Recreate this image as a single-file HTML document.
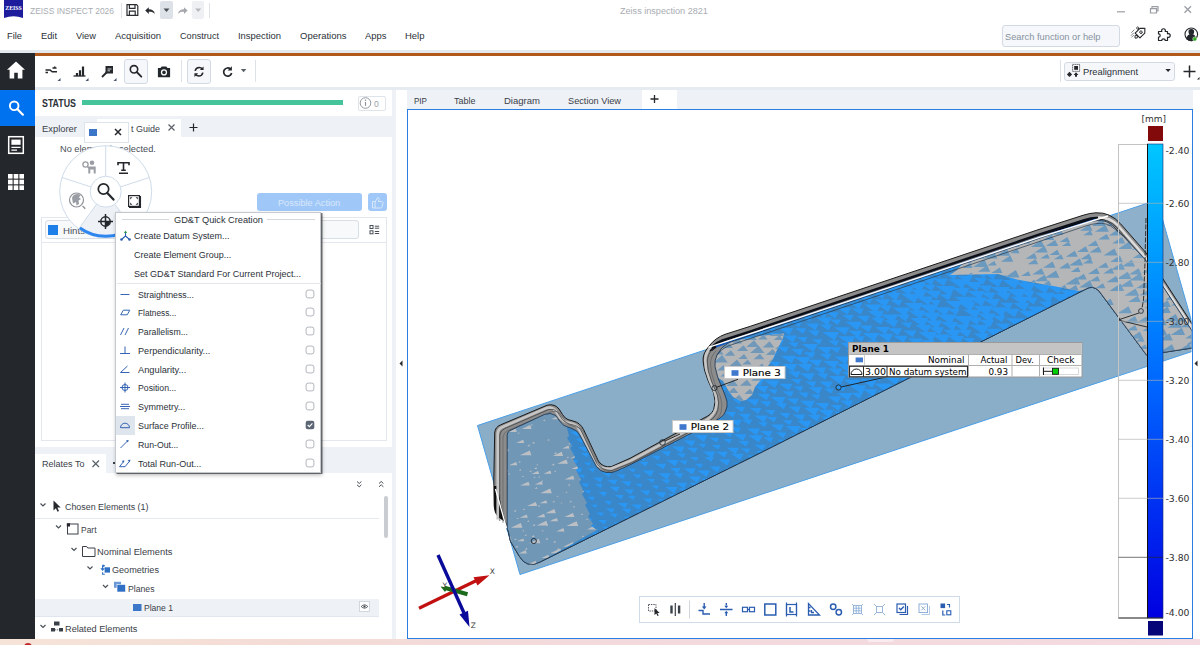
<!DOCTYPE html>
<html lang="en"><head><meta charset="utf-8"><title>ZEISS INSPECT 2026</title>
<style>
html,body{margin:0;padding:0;}
body{width:1200px;height:645px;overflow:hidden;background:#fff;position:relative;font-family:"Liberation Sans",sans-serif;}
.t{position:absolute;white-space:pre;line-height:14px;transform-origin:0 50%;}
.b{position:absolute;box-sizing:border-box;}
svg{position:absolute;left:0;top:0;overflow:visible;}
</style></head><body>
<svg width="30" height="22" viewBox="0 0 30 22"><path d="M4 0H23V18Q13.5 14.6 4 18Z" fill="#1c1c9c"/><text x="13.500" y="9.800" font-family="Liberation Serif,serif" font-weight="700" font-size="6.4" fill="#fff" text-anchor="middle" textLength="16.500" lengthAdjust="spacingAndGlyphs">ZEISS</text></svg>
<span class="t" style="left:30.0px;top:4px;line-height:13px;font-size:9.8px;color:#a9adb3;transform:scaleX(0.8584);">ZEISS INSPECT 2026</span>
<div class="b" style="left:120.5px;top:3px;width:1px;height:15px;background:#dfe3e8"></div>
<div class="b" style="left:160px;top:1px;width:13px;height:18px;background:#dde2e9;border-radius:2px"></div>
<div class="b" style="left:192px;top:1px;width:12px;height:18px;background:#eef0f3;border-radius:2px"></div>
<div class="b" style="left:208.5px;top:3px;width:1px;height:15px;background:#dfe3e8"></div>
<svg width="220" height="22" viewBox="0 0 220 22">
<g fill="none" stroke="#2a2d31" stroke-width="1.2"><path d="M127 4.6h9.5l1.3 1.3v9.5h-10.8z"/><path d="M129.4 4.8v3.6h5.6V4.8M129.4 15.2v-4h5.8v4"/></g>
<path d="M145.2 10.6l3.6-3.4v2.1c3.4 0 5.6 1.6 6 4.6-1.4-1.8-3.2-2.3-6-2.2v2.2z" fill="#2a2d31"/>
<path d="M163.5 8.6h6l-3 3.4z" fill="#4a4f56"/>
<path d="M187.6 10.6l-3.6-3.4v2.1c-3.4 0-5.6 1.6-6 4.6 1.4-1.8 3.2-2.3 6-2.2v2.2z" fill="#a4a8ad"/>
<path d="M195.2 8.6h6l-3 3.4z" fill="#b4b8bd"/>
</svg>
<span class="t" style="left:620.0px;top:4px;line-height:13px;font-size:9.7px;color:#a9adb3;transform:scaleX(0.9380);">Zeiss inspection 2821</span>
<svg width="1200" height="22" viewBox="0 0 1200 22"><g fill="none" stroke="#9a9ea4" stroke-width="1.2"><path d="M1117 11.8h8"/><path d="M1150.5 8.6h6v4.4h-6zM1152 8.6V6.6h6v4.4h-1.6"/><path d="M1184.5 6.2l6.5 6.5M1191 6.2l-6.5 6.5" stroke-width="1.3"/></g></svg>
<span class="t" style="left:7.0px;top:29px;line-height:13px;font-size:9.8px;color:#2b3138;transform:scaleX(0.9500);">File</span>
<span class="t" style="left:41.0px;top:29px;line-height:13px;font-size:9.8px;color:#2b3138;transform:scaleX(0.9475);">Edit</span>
<span class="t" style="left:76.0px;top:29px;line-height:13px;font-size:9.8px;color:#2b3138;transform:scaleX(0.9495);">View</span>
<span class="t" style="left:115.0px;top:29px;line-height:13px;font-size:9.8px;color:#2b3138;transform:scaleX(0.9707);">Acquisition</span>
<span class="t" style="left:180.0px;top:29px;line-height:13px;font-size:9.8px;color:#2b3138;transform:scaleX(0.9300);">Construct</span>
<span class="t" style="left:238.0px;top:29px;line-height:13px;font-size:9.8px;color:#2b3138;transform:scaleX(0.9626);">Inspection</span>
<span class="t" style="left:299.5px;top:29px;line-height:13px;font-size:9.8px;color:#2b3138;transform:scaleX(0.9701);">Operations</span>
<span class="t" style="left:364.5px;top:29px;line-height:13px;font-size:9.8px;color:#2b3138;transform:scaleX(0.9626);">Apps</span>
<span class="t" style="left:404.5px;top:29px;line-height:13px;font-size:9.8px;color:#2b3138;transform:scaleX(0.9675);">Help</span>
<div class="b" style="left:1001.5px;top:24.5px;width:118px;height:22px;background:#f5f7fa;border:1px solid #d3dae3;border-radius:3px"></div>
<span class="t" style="left:1005.0px;top:30px;line-height:13px;font-size:9.8px;color:#8792a0;transform:scaleX(0.9476);">Search function or help</span>
<svg width="1200" height="50" viewBox="0 0 1200 50"><g fill="none" stroke="#24272b" stroke-width="1.100" stroke-linejoin="round" stroke-linecap="round">
<g transform="translate(1139.800,33.300) rotate(45)"><path d="M0 -7.200L3.400 -3.600V3.200H-3.400V-3.600Z"/><circle cx="0" cy="-1.600" r="1.300" stroke-width=".9"/><path d="M0 3.400l1.500 1.700-1.500 1.700-1.500-1.700z" stroke-width=".9"/><path d="M-4.600 4.200v3.400M-6.400 1.600v3.600M-3 5.800v2.600" stroke-width=".8" stroke="#6a6f76"/><circle cx="-5.200" cy="-2.200" r="1.100" stroke-width=".8"/></g>
<path d="M1158.500 31.500H1161.800A1.900 1.900 0 1 1 1165.200 31.500H1167.500V33.800A1.900 1.900 0 1 1 1167.500 37.200V40.500H1165.200A1.700 1.700 0 1 0 1161.800 40.500H1158.500V37.200A1.700 1.700 0 1 0 1158.500 33.800Z" stroke-width="1.200"/>
<circle cx="1191.300" cy="34.300" r="6.300"/><circle cx="1191.300" cy="31.800" r="2.300" fill="#24272b"/><path d="M1187 38.900c.4-3 2.100-4.300 4.300-4.300s3.900 1.300 4.300 4.300c-2.700 2.300-5.900 2.300-8.600 0z" fill="#24272b"/></g>
<circle cx="1194.800" cy="39" r="2.100" fill="#2db01e" stroke="#fff" stroke-width=".5"/></svg>
<div class="b" style="left:0px;top:50px;width:1200px;height:3.5px;background:#e3e8ee"></div>
<div class="b" style="left:0px;top:53px;width:1200px;height:3px;background:#b0591b"></div>
<div class="b" style="left:35px;top:86.5px;width:1165px;height:3.5px;background:#e6ebf1"></div>
<div class="b" style="left:0px;top:53px;width:35px;height:586px;background:#24272b"></div>
<div class="b" style="left:0px;top:90px;width:35px;height:36px;background:#0072ef"></div>
<svg width="36" height="200" viewBox="0 0 36 200">
<path d="M16 61.500l-9 8.300h2.600v8.700h4.600v-5.800h3.600v5.800h4.600v-8.700h2.600z" fill="#fff"/>
<g fill="none" stroke="#fff" stroke-width="1.900"><circle cx="14.200" cy="105.800" r="4.300"/><path d="M17.300 109l5.600 5.700" stroke-linecap="round" stroke-width="2.200"/></g>
<rect x="8.700" y="136.700" width="14.600" height="16.600" fill="none" stroke="#fff" stroke-width="1.500"/><rect x="11.400" y="139.600" width="9.200" height="5.200" fill="#fff"/><path d="M11.400 147.400h9.200M11.400 150.200h5.600" stroke="#fff" stroke-width="1.200"/>
<g fill="#fff"><rect x="8" y="174" width="4.600" height="4.600"/><rect x="13.700" y="174" width="4.600" height="4.600"/><rect x="19.400" y="174" width="4.600" height="4.600"/><rect x="8" y="179.700" width="4.600" height="4.600"/><rect x="13.700" y="179.700" width="4.600" height="4.600"/><rect x="19.400" y="179.700" width="4.600" height="4.600"/><rect x="8" y="185.400" width="4.600" height="4.600"/><rect x="13.700" y="185.400" width="4.600" height="4.600"/><rect x="19.400" y="185.400" width="4.600" height="4.600"/></g>
</svg>
<div class="b" style="left:123.5px;top:59px;width:24.5px;height:24.5px;background:#f5f7fa;border:1px solid #d3dae3;border-radius:3px"></div>
<div class="b" style="left:186.5px;top:59px;width:24.5px;height:24.5px;background:#f5f7fa;border:1px solid #d3dae3;border-radius:3px"></div>
<div class="b" style="left:181px;top:60px;width:1px;height:22px;background:#dde2e8"></div>
<div class="b" style="left:254.8px;top:60px;width:1px;height:22px;background:#dde2e8"></div>
<div class="b" style="left:1060px;top:60px;width:1px;height:22px;background:#dde2e8"></div>
<svg width="270" height="90" viewBox="0 0 270 90"><g fill="none" stroke="#24272b" stroke-width="1.500">
<path d="M45.500 70h4.500l2.200 1.800h4.800M52.500 68h4M45.500 72.500h2.500M55 66.500l-1 2"/>
<path d="M73.500 76h12" stroke-width="1.300"/><path d="M77 76v-3M80 76v-5.800M83 76v-9.500" stroke-width="2.200"/>
<path d="M102 77l5-5" stroke-width="1.800"/>
</g>
<path d="M105.500 66h7.500v7.500h-7.500z" fill="#24272b"/><path d="M107.500 69h4M107.500 70.800h2.500" stroke="#fff" stroke-width=".8"/>
<g fill="#46506a"><path d="M57.500 81l3-3v3z"/><path d="M85.500 81l3-3v3z"/><path d="M113.500 81l3-3v3z"/></g>
<g fill="none" stroke="#24272b" stroke-width="1.600"><circle cx="134" cy="69.300" r="3.700"/><path d="M136.700 72l4.600 4.700" stroke-linecap="round" stroke-width="1.800"/></g>
<g transform="translate(.4,.8)"><path d="M157.500 67.200h2.600l1.200-1.500h4.600l1.200 1.500h2.600v9.300h-12.200z" fill="#24272b"/><circle cx="163.600" cy="71.600" r="3.100" fill="#fff"/><circle cx="163.600" cy="71.600" r="1.800" fill="#24272b"/></g>
<g transform="translate(199 71.700) scale(.88) translate(-199 -71.500)"><g fill="none" stroke="#24272b" stroke-width="1.800"><path d="M194.600 70.500c.6-2.500 2.400-3.800 4.600-3.800 1.600 0 2.800.6 3.800 1.800M203.400 72.500c-.6 2.500-2.400 3.800-4.600 3.800-1.600 0-2.800-.6-3.800-1.800"/></g>
<path d="M204.200 65.500v4.200h-4.200zM193.800 77.500v-4.200h4.200z" fill="#24272b"/></g>
<g transform="translate(227.500 71.500) scale(.86) translate(-227.500 -71)"><path d="M231 68.200a4.700 4.700 0 1 0 1.300 4.600" fill="none" stroke="#24272b" stroke-width="2"/><path d="M232.600 64.800v5h-5z" fill="#24272b"/></g>
<path d="M240.800 69h5.600l-2.800 3.200z" fill="#5a6068"/>
</svg>
<div class="b" style="left:1064px;top:61.5px;width:110.5px;height:19px;background:#f5f7fa;border:1px solid #d3dae3;border-radius:3px"></div>
<span class="t" style="left:1083.0px;top:65px;line-height:13px;font-size:9.8px;color:#2b3138;transform:scaleX(0.9526);">Prealignment</span>
<svg width="1200" height="90" viewBox="0 0 1200 90">
<g fill="#24272b"><path d="M1069.500 71.800l2.600 2.600-2.600 2.600-2.600-2.600z"/><path d="M1076 72.200l2.400 2.800h-1.400v1.800h-2v-1.800h-1.400z"/><rect x="1074.200" y="66" width="3.800" height="3.800"/></g>
<rect x="1072.600" y="64.400" width="7" height="7" fill="none" stroke="#24272b" stroke-width=".9" stroke-dasharray="1.100 .9"/>
<path d="M1165.400 69h5.400l-2.700 3.100z" fill="#24272b"/>
<path d="M1183.500 71.500h12M1189.500 65.500v12" stroke="#24272b" stroke-width="1.500"/><path d="M1199.500 79.500l-2.500 0 2.500-2.500z" fill="#24272b"/>
</svg>
<span class="t" style="left:41.5px;top:97px;line-height:13px;font-size:10.3px;color:#2b3138;font-weight:700;transform:scaleX(0.8570);">STATUS</span>
<div class="b" style="left:81.5px;top:100.3px;width:261.5px;height:5.1px;background:#45c49b"></div>
<div class="b" style="left:357.5px;top:95.5px;width:28.5px;height:15px;border:1px solid #dfe4ea;border-radius:2px;background:#fff"></div>
<svg width="400" height="120" viewBox="0 0 400 120"><circle cx="365.500" cy="103" r="5.300" fill="none" stroke="#8a8f96" stroke-width=".9"/><path d="M365.500 102v3.800" stroke="#8a8f96" stroke-width="1.100"/><circle cx="365.500" cy="100.200" r=".75" fill="#8a8f96"/></svg>
<span class="t" style="left:373.8px;top:97px;line-height:13px;font-size:9.5px;color:#9aa0a8;transform:scaleX(0.9086);">0</span>
<div class="b" style="left:35px;top:116px;width:357px;height:21px;background:#eef2f7"></div>
<div class="b" style="left:97px;top:118.5px;width:84px;height:18.5px;background:#fff"></div>
<span class="t" style="left:41.5px;top:122px;line-height:13px;font-size:9.7px;color:#3a4048;transform:scaleX(0.9691);">Explorer</span>
<span class="t" style="left:130.5px;top:122px;line-height:13px;font-size:9.7px;color:#3a4048;transform:scaleX(0.9274);">t Guide</span>
<svg width="400" height="140" viewBox="0 0 400 140"><path d="M168.500 124.500l6 6M174.500 124.500l-6 6" stroke="#5a6068" stroke-width="1.200"/><path d="M189.500 127.500h8M193.500 123.500v8" stroke="#24272b" stroke-width="1.200"/></svg>
<span class="t" style="left:59.5px;top:142px;line-height:13px;font-size:9.7px;color:#4a5058;transform:scaleX(0.9522);">No element is selected.</span>
<div class="b" style="left:257px;top:193px;width:105px;height:18.4px;background:#9fc7f8;border-radius:3px"></div>
<span class="t" style="left:278.0px;top:196px;line-height:13px;font-size:9.7px;color:#d9e8fb;transform:scaleX(0.9471);">Possible Action</span>
<div class="b" style="left:368.2px;top:193px;width:18.8px;height:18.4px;background:#9fc7f8;border-radius:3px"></div>
<svg width="400" height="220" viewBox="0 0 400 220"><path d="M372.500 201.500h2.600v6.500h-2.600zM375.100 202l2.400-4.200c1.300-.3 1.700.6 1.500 1.600l-.5 2.200h3.300c1 0 1.400.7 1.200 1.500l-1 3.800c-.2.700-.7 1.100-1.500 1.100h-5.400" fill="none" stroke="#d9e8fb" stroke-width="1"/></svg>
<div class="b" style="left:40.5px;top:216.8px;width:346.5px;height:224.7px;border:1px solid #e3e8ee;background:#fff"></div>
<div class="b" style="left:40.5px;top:242px;width:346.5px;height:1px;background:#e3e8ee"></div>
<div class="b" style="left:45px;top:220.3px;width:314px;height:19px;border:1px solid #d8dee6;border-radius:3px;background:#f7f9fb"></div>
<div class="b" style="left:48px;top:225px;width:10px;height:10px;background:#1e7fe8"></div>
<span class="t" style="left:63.0px;top:224px;line-height:13px;font-size:9.7px;color:#4a5058;transform:scaleX(0.9955);">Hints</span>
<svg width="400" height="240" viewBox="0 0 400 240"><g fill="none" stroke="#4a5058" stroke-width="1"><rect x="370" y="225.500" width="3" height="3"/><rect x="370" y="230.800" width="3" height="3"/><path d="M374.800 226.200h4.400M374.800 228.200h4.400M374.800 231.500h4.400M374.800 233.500h4.400"/></g></svg>
<div class="b" style="left:35px;top:446.8px;width:357px;height:26.2px;background:#eef2f7"></div>
<div class="b" style="left:35px;top:453.9px;width:70.7px;height:19.2px;background:#fff"></div>
<div class="b" style="left:113.3px;top:462px;width:1.5px;height:1.5px;background:#3a4048"></div>
<span class="t" style="left:41.8px;top:457px;line-height:13px;font-size:9.7px;color:#3a4048;transform:scaleX(0.9310);">Relates To</span>
<svg width="400" height="500" viewBox="0 0 400 500"><path d="M92.500 460.500l6.500 6.500M99 460.500l-6.500 6.500" stroke="#5a6068" stroke-width="1.200"/>
<g fill="none" stroke="#4a5058" stroke-width="1"><path d="M357 481.500l2.200 2 2.200-2M357 484.800l2.200 2 2.200-2"/><path d="M379 483.500l2.200-2 2.200 2M379 486.800l2.200-2 2.200 2"/></g></svg>
<div class="b" style="left:383.5px;top:496px;width:4px;height:41.5px;background:#c9ccd0;border-radius:2px"></div>
<div class="b" style="left:35px;top:517.5px;width:344px;height:1px;background:#e6eaef"></div>
<div class="b" style="left:35px;top:598.5px;width:344px;height:17px;background:#eef2f7"></div>
<div class="b" style="left:35px;top:615.5px;width:344px;height:1px;background:#dfe6ee"></div>
<span class="t" style="left:64.8px;top:500px;line-height:13px;font-size:9.7px;color:#3a4048;transform:scaleX(0.9165);">Chosen Elements (1)</span>
<span class="t" style="left:80.5px;top:523px;line-height:13px;font-size:9.7px;color:#3a4048;transform:scaleX(0.8713);">Part</span>
<span class="t" style="left:96.7px;top:545px;line-height:13px;font-size:9.7px;color:#3a4048;transform:scaleX(0.9593);">Nominal Elements</span>
<span class="t" style="left:112.2px;top:563px;line-height:13px;font-size:9.7px;color:#3a4048;transform:scaleX(0.9375);">Geometries</span>
<span class="t" style="left:127.7px;top:582px;line-height:13px;font-size:9.7px;color:#3a4048;transform:scaleX(0.8935);">Planes</span>
<span class="t" style="left:143.8px;top:601px;line-height:13px;font-size:9.7px;color:#3a4048;transform:scaleX(0.8815);">Plane 1</span>
<span class="t" style="left:64.8px;top:622px;line-height:13px;font-size:9.7px;color:#3a4048;transform:scaleX(0.9470);">Related Elements</span>
<svg width="400" height="645" viewBox="0 0 400 645">
<g fill="none" stroke="#4a5058" stroke-width="1.150"><path d="M40.500 503.500l2.500 2.500 2.500-2.500"/><path d="M56 525.500l2.500 2.500 2.500-2.500"/><path d="M71.500 548l2.500 2.500 2.500-2.500"/><path d="M87.500 566.500l2.500 2.500 2.500-2.500"/><path d="M103 585l2.500 2.500 2.500-2.500"/><path d="M40.500 625l2.500 2.500 2.500-2.500"/></g>
<path d="M53.500 500.500v10l2.400-2.300 1.600 3.600 1.500-.7-1.600-3.500h3.300z" fill="#24272b"/>
<rect x="67.500" y="524" width="10.500" height="10" fill="none" stroke="#3a4048" stroke-width="1"/><rect x="66.800" y="523.300" width="3.200" height="3.200" fill="#24272b"/>
<path d="M82.500 546.500h4.200l1 1.500h7.300v8.500h-12.500z" fill="none" stroke="#3a4048" stroke-width="1"/>
<g fill="#2f6fc4"><rect x="104.600" y="567.300" width="5.400" height="5.300"/><path d="M104.800 565.800h-2.200v3.400M104.800 574.200h-2.200v-2" stroke="#2f6fc4" stroke-width="1.100" fill="none"/><path d="M100.300 568.300h4.600l-2.300 2.800z"/><path d="M102.600 564.200l2.400 1.600-2.400 1.600z"/></g>
<rect x="114" y="581.800" width="7" height="6" fill="#6a9ad8"/><rect x="117" y="584.500" width="8.500" height="7.500" fill="#2f6fc4" stroke="#fff" stroke-width=".6"/>
<rect x="133" y="604" width="8.500" height="7" fill="#3b76c9"/>
<g fill="#3a4048"><rect x="54" y="621.500" width="5.500" height="4"/><rect x="51" y="628" width="4" height="3.500"/><rect x="59" y="628" width="4" height="3.500"/><path d="M55.200 629.800h3.600" stroke="#3a4048" stroke-width="1" stroke-dasharray="1 1"/></g>
<rect x="359.500" y="601.500" width="10" height="10" fill="#fff" stroke="#c9ced5" stroke-width=".8"/><path d="M361.200 606.500q3.300-3.400 6.600 0q-3.300 3.400-6.600 0z" fill="none" stroke="#3a4048" stroke-width=".8"/><circle cx="364.500" cy="606.500" r="1.100" fill="#3a4048"/>
</svg>
<div class="b" style="left:392px;top:90px;width:3.5px;height:549px;background:#eef2f7"></div>
<svg width="410" height="400" viewBox="0 0 410 400"><path d="M399.500 363.500l3-3v6z" fill="#24272b"/></svg>
<div class="b" style="left:407px;top:90px;width:785.5px;height:20px;background:#eef2f7"></div>
<div class="b" style="left:641.5px;top:90px;width:35px;height:19.5px;background:#fff"></div>
<span class="t" style="left:413.5px;top:94px;line-height:13px;font-size:9.7px;color:#3a4048;transform:scaleX(0.8315);">PIP</span>
<span class="t" style="left:454.0px;top:94px;line-height:13px;font-size:9.7px;color:#3a4048;transform:scaleX(0.9272);">Table</span>
<span class="t" style="left:503.5px;top:94px;line-height:13px;font-size:9.7px;color:#3a4048;transform:scaleX(0.9822);">Diagram</span>
<span class="t" style="left:567.5px;top:94px;line-height:13px;font-size:9.7px;color:#3a4048;transform:scaleX(0.9482);">Section View</span>
<svg width="700" height="110" viewBox="0 0 700 110"><path d="M650.500 99h8M654.500 95v8" stroke="#24272b" stroke-width="1.300"/></svg>
<div class="b" style="left:407px;top:109px;width:785.5px;height:529.5px;background:#fff;border:1px solid #2a7de1"></div>
<svg width="1200" height="400" viewBox="0 0 1200 400"><path d="M1194.500 363.500l3-3v6z" fill="#24272b"/></svg>
<svg width="1200" height="645" viewBox="0 0 1200 645">
<defs>
<clipPath id="vp"><rect x="408" y="110" width="783.500" height="527.500"/></clipPath>
<pattern id="triD" width="13" height="8" patternUnits="userSpaceOnUse" patternTransform="rotate(-27) skewX(-20)">
<path d="M0 7.500L9.500 7.500 9.500 1.500Q5 2.500 0 7.500Z" fill="#3a86c8"/><path d="M9.500 4L13 4 13 .5Q11 1.500 9.500 4Z" fill="#3a86c8"/><path d="M2 2.500L6 2.500 6 .5Z" fill="#3a86c8"/>
</pattern>
<pattern id="triB" width="19" height="13" patternUnits="userSpaceOnUse" patternTransform="rotate(-27) skewX(-20)">
<path d="M1 9L8 9 8 4.500Z" fill="#2397fb"/><path d="M11 4L15 4 15 1.500Z" fill="#2397fb"/>
</pattern>
<pattern id="spk" width="29" height="21" patternUnits="userSpaceOnUse" patternTransform="rotate(-12)">
<path d="M2 7L10 5 8.500 9.500Z" fill="#bcc0c4"/><path d="M17 16.500L23.500 15 22.500 19Z" fill="#bcc0c4"/><path d="M15 4l2 .4-1 1.600z" fill="#bcc0c4"/><path d="M5 16l1.600 .3-.7 1.800z" fill="#bcc0c4"/><path d="M24 6l1.400 .3-.6 1.500z" fill="#bcc0c4"/>
</pattern>
<pattern id="spk2" width="16" height="11" patternUnits="userSpaceOnUse" patternTransform="rotate(-25) skewX(-15)">
<path d="M.5 9L10 9 9.500 3Z" fill="#6a97bd"/><path d="M10.500 4.500L16 4.500 15.500 .5Z" fill="#6a97bd"/>
</pattern>
<pattern id="spk3" width="41" height="29" patternUnits="userSpaceOnUse" patternTransform="rotate(-18)">
<path d="M3 10l9-2 3 3-5 1 2 3-6-1z" fill="#6a97bd"/><path d="M24 22l8-1.500-2 4z" fill="#6a97bd"/>
</pattern>
<pattern id="spk4" width="19" height="11" patternUnits="userSpaceOnUse" patternTransform="rotate(-22) skewX(-20)">
<path d="M0 9.500Q5 3 12 4.500Q16 6 19 9.500Z" fill="#7198b8"/>
</pattern>
<pattern id="spkb" width="37" height="31" patternUnits="userSpaceOnUse" patternTransform="rotate(-20)">
<path d="M4 12l7-3 1 2 5-1-4 3-3-1z" fill="#bcc0c4"/><path d="M22 25l6-2.500-1.500 4z" fill="#bcc0c4"/>
</pattern>
<linearGradient id="gD" gradientUnits="userSpaceOnUse" x1="590" y1="490" x2="960" y2="325">
<stop offset="0" stop-color="#fff" stop-opacity="1"/><stop offset=".3" stop-color="#fff" stop-opacity=".8"/><stop offset=".65" stop-color="#fff" stop-opacity=".4"/><stop offset="1" stop-color="#fff" stop-opacity="0"/>
</linearGradient>
<mask id="mD" maskUnits="userSpaceOnUse" x="400" y="100" width="800" height="540"><rect x="400" y="100" width="800" height="540" fill="url(#gD)"/></mask>
<linearGradient id="cbar" x1="0" y1="0" x2="0" y2="1"><stop offset="0" stop-color="#00c6ff"/><stop offset=".25" stop-color="#0098ff"/><stop offset=".5" stop-color="#0068ff"/><stop offset=".8" stop-color="#0028f0"/><stop offset="1" stop-color="#0000e0"/></linearGradient>
</defs>
<g clip-path="url(#vp)">
<path d="M477.500 425.500 L1157 200 L1199.500 349 L520 574.500Z" fill="#8aadc8" stroke="#4a9fe8" stroke-width="1"/>
<path d="M493.800 480 L494.200 506 Q494.500 513 498 516.500 L505.500 522 L508 530 L510.500 541.500 L519.500 556.500 Q523 562.500 528 564 Q533 566 540 562 L760 453 L1085 289.500 Q1093 284.500 1099 291 L1146.500 355 L1200 346.800 L1200 336 L1146 252.800 L1120.500 223.700 Q1110 212 1096 212.800 Q1090 213 1083 215.300 L1040 229.100 L800 309.600 L750.300 326.300 L725.100 334.300 Q715 338 709.200 346 Q702 354 703.200 362 L704.500 370 L708 380.400 L713.700 393 Q716.500 401.500 713.700 409.700 Q711 415 704 418 L630 458.300 L611.400 466.600 Q603 468 598.400 461 L583.500 429.400 Q580 422.500 573 421 L568 419.600 Q565 418.600 562.500 414.500 L559 409 Q555 403.500 547.200 405.200 L500.700 424.800 Q495 427 494.700 433Z" fill="#8c8c8c" stroke="#1a1a1a" stroke-width="1"/>
<path d="M707 351.500 Q712 343.500 722 339.300 L750.300 330.200 L1040 233 L1084 218.900 Q1094 215.800 1100 217 L1105 219.300 L1098 219.800 L1040 235.600 L750.300 332.800 L724 341.600 L712 351Z" fill="#0a0e18"/>
<path d="M716 346.500 L750.300 334.600 L1040 237.400 L1096 219.500" fill="none" stroke="#1256b8" stroke-width="2"/>
<path d="M494 486 L494.200 506 Q494.500 513 498 516.500 L505.500 522 L501 505 L497.500 486Z" fill="#0c0c0c"/>
<path d="M498.500 520 L498.500 434 Q499 429.500 503.500 427.500 L547.500 408.500 Q553 407 556.500 411.500 L561 418.500 Q564 422 568 423 L573 424.300 Q578 425.500 580.500 431 L595.500 462.500 Q600 469.500 611 469.500 L631 461.500 L706 421.500 Q714 417 716.500 409.500 Q718.500 402 716 394 L710.500 381 L707 370 L706 361 Q706 353 712 347.500" fill="none" stroke="#c6c6c6" stroke-width="2.600" transform="translate(-.8,-.6)"/>
<path d="M498.500 520 L498.500 434 Q499 429.500 503.500 427.500 L547.500 408.500 Q553 407 556.500 411.500 L561 418.500 Q564 422 568 423 L573 424.300 Q578 425.500 580.500 431 L595.500 462.500 Q600 469.500 611 469.500 L631 461.500 L706 421.500 Q714 417 716.500 409.500 Q718.500 402 716 394 L710.500 381 L707 370 L706 361 Q706 353 712 347.500" fill="none" stroke="#3a3a3a" stroke-width=".7" transform="translate(1.300,1)"/>
<path d="M498.500 520 L498.500 434 Q499 429.500 503.500 427.500 L547.500 408.500 Q553 407 556.500 411.500 L561 418.500 Q564 422 568 423 L573 424.300 Q578 425.500 580.500 431 L595.500 462.500 Q600 469.500 611 469.500 L631 461.500 L706 421.500 Q714 417 716.500 409.500 Q718.500 402 716 394 L710.500 381 L707 370 L706 361 Q706 353 712 347.500" fill="none" stroke="#5a5a5a" stroke-width=".6" transform="translate(4.500,3)"/>
<path d="M1098 217.500 Q1110 217 1118 225.500 L1144 255.500 L1200 340" fill="none" stroke="#dcdcdc" stroke-width="2.400"/>
<path d="M1098 217.500 Q1110 217 1118 225.500 L1144 255.500 L1200 340" fill="none" stroke="#2a2a2a" stroke-width=".8" transform="translate(-1.500,1.800)"/>
<clipPath id="cFace"><path d="M507.200 530 L507.200 435 Q507.200 432 510 430.500 L544.400 414.500 Q550.500 412 555.600 415.500 L561.200 422.900 Q563.500 425.800 566.700 426.600 L572 428.500 Q577 430 579.800 435 L596.500 466.600 Q600 471.500 606 472.400 L612 472.400 Q616 471.500 630 464.800 L715 421 Q723 417 724.900 412.500 Q728 407 727 401.400 L724.200 393 L717.900 377.700 L715 366.500 Q714.500 360 717 355 Q721 347 728 343 L750.300 335.300 L1040 238.100 L1086 222.800 Q1098 219 1106 221.500 Q1110 223 1114 227 L1123.300 236.300 L1145.600 260 L1200 343 L1200 346.800 L1146.500 355 L1099 291 Q1093 284.500 1085 289.500 L760 453 L540 562 Q533 566 528 564 Q523 562.500 519.500 556.500 L510.500 541.500 L508 530Z"/></clipPath>
<path d="M507.200 530 L507.200 435 Q507.200 432 510 430.500 L544.400 414.500 Q550.500 412 555.600 415.500 L561.200 422.900 Q563.500 425.800 566.700 426.600 L572 428.500 Q577 430 579.800 435 L596.500 466.600 Q600 471.500 606 472.400 L612 472.400 Q616 471.500 630 464.800 L715 421 Q723 417 724.900 412.500 Q728 407 727 401.400 L724.200 393 L717.900 377.700 L715 366.500 Q714.500 360 717 355 Q721 347 728 343 L750.300 335.300 L1040 238.100 L1086 222.800 Q1098 219 1106 221.500 Q1110 223 1114 227 L1123.300 236.300 L1145.600 260 L1200 343 L1200 346.800 L1146.500 355 L1099 291 Q1093 284.500 1085 289.500 L760 453 L540 562 Q533 566 528 564 Q523 562.500 519.500 556.500 L510.500 541.500 L508 530Z" fill="#3987c9"/>
<g clip-path="url(#cFace)"><path d="M495.7 534.5h7.7l-2.1 3.9zM500.3 541.4h6.6l-1.8 3.3zM503.8 548.1h6.5l-1.8 3.3zM506.3 555.8h8.1l-2.2 4.1zM511.8 563.5h8.1l-2.2 4.1zM497.1 507h7.2l-2 3.7zM500.1 514.6h8.7l-2.4 4.4zM504.9 520.5h6.5l-1.8 3.3zM506.6 528.1h6.9l-1.9 3.5zM510.4 536.4h9.7l-2.7 4.9zM514.5 543.9h9l-2.5 4.5zM517.3 550.6h6.6l-1.8 3.3zM521.8 558.5h9.2l-2.5 4.6zM525.5 566.1h8.8l-2.4 4.4zM497.5 476.8h9.6l-2.7 4.9zM500.7 486.1h8.7l-2.4 4.4zM503.6 493.9h9.4l-2.6 4.7zM507.6 501h6.8l-1.9 3.4zM511.4 506.7h6.9l-1.9 3.5zM515.7 515.7h9.1l-2.5 4.6zM518.1 523.6h10l-2.8 5zM522.4 530.6h8.8l-2.4 4.4zM527 538.2h9.8l-2.7 5zM528.3 546.4h9.1l-2.5 4.6zM534.3 554.3h9l-2.5 4.6zM536.3 561.5h7.5l-2.1 3.8zM497.1 448.3h6.4l-1.8 3.2zM499.7 457.5h6.8l-1.9 3.4zM503.7 464.1h6.8l-1.9 3.5zM506.9 471.9h10l-2.8 5zM512.6 480.4h8.6l-2.4 4.3zM514.6 487h9.9l-2.7 5zM519.8 496h7.8l-2.2 3.9zM521.6 501.7h6.9l-1.9 3.5zM526 510.2h7.3l-2 3.7zM528.3 517.4h7.4l-2 3.7zM533.4 526.4h7.9l-2.2 4zM536.8 533.1h9.2l-2.5 4.6zM539.2 541.4h9.1l-2.5 4.6zM545 548.8h9.6l-2.6 4.8zM547.3 554.6h7.9l-2.2 4zM499.9 427.4h9l-2.5 4.5zM503.7 435.7h7.2l-2 3.6zM506.9 442.8h6.5l-1.8 3.3zM511.4 450.1h6.7l-1.9 3.4zM515.7 458h10l-2.8 5zM518.6 466.1h7.4l-2 3.7zM523.5 475.4h6.8l-1.9 3.4zM526.2 480.6h8.3l-2.3 4.2zM529.4 488.7h6.7l-1.9 3.4zM532.5 495.7h9.8l-2.7 4.9zM537.1 503.6h10.3l-2.8 5.2zM539.4 512.2h8.6l-2.4 4.3zM545.1 520.2h10.4l-2.9 5.3zM547.5 526.4h7.4l-2 3.7zM551.5 535.6h9.5l-2.6 4.8zM554.3 543.3h7.7l-2.1 3.9zM559.5 550.9h10.4l-2.9 5.3zM512.6 422.3h9.7l-2.7 4.9zM515.2 429.4h8.5l-2.3 4.3zM518.6 437.6h6.4l-1.8 3.2zM524 445.7h9.2l-2.5 4.6zM527.7 454.6h10.2l-2.8 5.2zM529.3 460.3h7.8l-2.2 4zM532.8 468.9h7.1l-2 3.6zM538.1 476.1h10.1l-2.8 5.1zM541.6 482.7h9l-2.5 4.6zM545.5 492.1h9.1l-2.5 4.6zM547.9 498.2h9.5l-2.6 4.8zM551.2 507.4h9.6l-2.7 4.9zM554.9 513.9h10.4l-2.9 5.2zM559.4 520.9h10.3l-2.8 5.2zM561.5 530.5h6.8l-1.9 3.4zM565.1 537.8h9.7l-2.7 4.9zM570 544.2h10.4l-2.9 5.3zM522 416.2h8.6l-2.4 4.3zM527 425.2h10.4l-2.9 5.2zM530 433.7h10.2l-2.8 5.2zM533 439.7h9.8l-2.7 4.9zM536.7 448.1h7.5l-2.1 3.8zM540.8 454.5h7.4l-2 3.7zM544.2 463h10.1l-2.8 5.1zM549.3 470.5h8.8l-2.4 4.4zM551.8 478.4h10.2l-2.8 5.1zM554.1 485.7h8.5l-2.3 4.3zM557.7 494.3h7.1l-2 3.6zM562.5 501.7h7l-1.9 3.5zM565.7 508.7h8.6l-2.4 4.4zM570.5 515.3h8.6l-2.4 4.4zM572.7 523.3h8.7l-2.4 4.4zM577 531.7h9.5l-2.6 4.8zM581.7 539h9.5l-2.6 4.8zM534 412h8.9l-2.5 4.5zM537.5 419.7h9.2l-2.5 4.6zM542.3 427.7h8.3l-2.3 4.2zM545.9 434.2h10l-2.8 5zM549.6 443.3h8.6l-2.4 4.4zM551 449.8h6.9l-1.9 3.5zM554.9 456.5h6.6l-1.8 3.3zM559.9 466.2h9.1l-2.5 4.6zM563.4 473.2h6.9l-1.9 3.5zM567.4 481.6h6.9l-1.9 3.5zM571.2 487.7h7.2l-2 3.6zM574.9 496.5h8.3l-2.3 4.2zM577 503.2h7l-1.9 3.5zM580 510.3h7.7l-2.1 3.9zM583.2 518.5h9.3l-2.6 4.7zM586.7 525.6h8.1l-2.3 4.1zM591.6 532.5h8.9l-2.5 4.5zM545.7 407.7h10.5l-2.9 5.3zM548 412.9h6.8l-1.9 3.4zM551.6 420.7h9.7l-2.7 4.9zM556.9 430.1h8.2l-2.3 4.1zM558.5 438h7.5l-2.1 3.8zM563.5 443.4h8.8l-2.4 4.4zM567.1 451.9h6.6l-1.8 3.3zM571.3 460h6.7l-1.8 3.4zM572.7 468.2h9.8l-2.7 4.9zM578.3 474.8h6.7l-1.8 3.4zM581.1 483.6h7.8l-2.2 3.9zM583.6 490.2h7.5l-2.1 3.8zM587.2 496.8h7.4l-2 3.7zM591 504.8h6.6l-1.8 3.3zM596.1 512.4h7.7l-2.1 3.9zM598.2 520.1h8.5l-2.3 4.3zM602 526.8h6.4l-1.8 3.3zM559.7 407.8h9.7l-2.7 4.9zM564.3 415.2h8.6l-2.4 4.3zM566.6 423.8h10.1l-2.8 5.1zM570.1 431.4h10.2l-2.8 5.1zM575.3 438.6h9.5l-2.6 4.8zM578.1 447h10.2l-2.8 5.1zM580.8 453h8.3l-2.3 4.2zM583.7 462.4h7.1l-2 3.6zM587.5 468.3h7.7l-2.1 3.9zM593 477.4h10.2l-2.8 5.2zM594.9 484.1h7.8l-2.1 3.9zM598.3 492.1h8.6l-2.4 4.3zM604 501h7.7l-2.1 3.9zM605.7 508.6h8.9l-2.5 4.5zM609.6 513.7h7.9l-2.2 4zM613.5 522.6h8.2l-2.3 4.1zM617.2 528.9h7.4l-2.1 3.8zM580.3 425.6h7.9l-2.2 4zM583.8 433h6.9l-1.9 3.5zM588.8 441.2h7.8l-2.1 3.9zM592.6 449.3h10.1l-2.8 5.1zM595.5 455.8h10.7l-2.9 5.4zM598.5 464.5h11.1l-3.1 5.6zM601.8 472.4h9.6l-2.7 4.9zM606.9 479.7h10.7l-3 5.4zM609.3 486.8h10.4l-2.9 5.2zM614.7 495.1h9l-2.5 4.5zM617.6 502.9h10.4l-2.9 5.3zM621.5 508.8h9.8l-2.7 4.9zM623.6 516.7h6.9l-1.9 3.5zM629.1 524.9h7.2l-2 3.6zM614.3 466.5h9.8l-2.7 4.9zM616.3 474.4h9.2l-2.5 4.6zM621.2 481.3h10.4l-2.9 5.2zM623.7 489.4h9.9l-2.7 5zM627.3 495.8h8.1l-2.2 4.1zM631.2 504.6h10.3l-2.8 5.2zM635.6 511.3h11.4l-3.1 5.8zM639.7 519.9h9.1l-2.5 4.6zM625.4 459.4h10l-2.8 5zM628 468.7h7.8l-2.1 3.9zM632.4 474.4h8.5l-2.4 4.3zM635.2 483.7h7.4l-2 3.7zM639.9 490.4h10.4l-2.9 5.2zM642.9 498.4h9.5l-2.6 4.8zM647.6 505.3h7.6l-2.1 3.9zM651.3 512.4h11.7l-3.2 5.9zM636.8 456.2h9.5l-2.6 4.8zM639 461.8h9.4l-2.6 4.8zM642.4 470.4h11.8l-3.3 6zM646.9 479h8l-2.2 4zM651.2 485.4h7.9l-2.2 4zM654.5 492.3h11.6l-3.2 5.8zM657.6 499.4h11.6l-3.2 5.9zM661.2 508.1h7.3l-2 3.7zM646.1 449.1h8.9l-2.5 4.5zM651.5 455.8h9l-2.5 4.5zM655.1 463.7h11.2l-3.1 5.6zM658.4 473.3h12l-3.3 6.1zM661.1 479.6h8.9l-2.5 4.5zM665.2 487.1h12.4l-3.4 6.3zM668 493.9h9.6l-2.6 4.8zM673.1 502.1h8l-2.2 4zM657.3 443.4h12.4l-3.4 6.2zM660.8 451.3h10.2l-2.8 5.2zM666.2 460h12.5l-3.4 6.3zM669.9 467.9h10.8l-3 5.5zM673 473.2h10.4l-2.9 5.3zM675.9 482.7h11.3l-3.1 5.7zM679 488.4h10.9l-3 5.5zM682.2 497.1h12.3l-3.4 6.2zM668.5 439.1h9.6l-2.6 4.8zM672 446.5h12.9l-3.6 6.5zM676.3 453.4h9.4l-2.6 4.7zM678.9 460.5h8.7l-2.4 4.4zM683.4 468.2h12.5l-3.5 6.3zM688.3 476.4h12.5l-3.5 6.3zM689.8 483h8.5l-2.4 4.3zM693.1 491h9.6l-2.6 4.8zM680.2 434h9.4l-2.6 4.7zM683.4 440.4h12l-3.3 6zM686.9 447.8h10.8l-3 5.4zM690.2 457h8.3l-2.3 4.2zM694.4 463.7h8.7l-2.4 4.4zM697.3 470.4h12.6l-3.5 6.3zM701.3 478.5h9.3l-2.6 4.7zM706.1 487.2h13.1l-3.6 6.6zM689.8 428h8.3l-2.3 4.2zM694.5 435.3h13l-3.6 6.6zM697.9 443.8h8.2l-2.3 4.1zM702.7 451.5h12.6l-3.5 6.4zM704.4 457h9.5l-2.6 4.8zM709.5 466.6h11l-3 5.6zM713 473.8h12.1l-3.3 6.1zM716.3 479.5h10.7l-2.9 5.4zM701.3 423.1h12.7l-3.5 6.4zM705.1 428.6h11.9l-3.3 6zM709.6 437.7h9.7l-2.7 4.9zM711.7 444.9h9l-2.5 4.5zM716.1 451.7h11.6l-3.2 5.8zM718.7 459.5h11.7l-3.2 5.9zM724.8 468h10.9l-3 5.5zM727.1 474.5h13.3l-3.7 6.7zM710.6 409.4h9.9l-2.7 5zM711.8 416.5h10.3l-2.8 5.2zM716.4 423.5h12.3l-3.4 6.2zM721.3 431h12.3l-3.4 6.2zM723.4 439.1h8.7l-2.4 4.4zM726.6 447.7h12.4l-3.4 6.3zM731 453.7h12.7l-3.5 6.4zM734.1 462.9h14l-3.9 7.1zM737.5 470.4h9.8l-2.7 5zM707.2 373h10.4l-2.9 5.2zM708.9 380.4h9.8l-2.7 4.9zM714.4 387.3h12.5l-3.5 6.3zM716.1 397h11l-3 5.5zM719.2 402.3h9.5l-2.6 4.8zM725 412h11l-3 5.5zM728.9 419.7h12.9l-3.6 6.5zM730.4 427.3h10.6l-2.9 5.4zM733.6 434.2h13l-3.6 6.6zM738.1 441h10.9l-3 5.5zM740.7 448.4h9.7l-2.7 4.9zM746.8 455.6h10.7l-3 5.4zM748.4 463.8h14.3l-3.9 7.2zM710.6 352.1h13.7l-3.8 6.9zM713.3 359.6h9.2l-2.5 4.6zM716.2 367.1h14.3l-4 7.2zM719.4 374.9h14.2l-3.9 7.2zM724.9 381.5h13.7l-3.8 6.9zM726.7 391.4h9.1l-2.5 4.6zM732 398.9h10.4l-2.9 5.2zM734.4 406.7h10.9l-3 5.5zM738 413.7h12.5l-3.5 6.3zM741.6 419.4h10.7l-3 5.4zM746.9 428.6h13.3l-3.7 6.7zM748.2 435.2h14.5l-4 7.3zM754.2 444.7h11.7l-3.2 5.9zM756 450.9h11.2l-3.1 5.6zM761.3 457.9h11.8l-3.3 6zM717.8 340h13.9l-3.8 7zM721.1 346.4h13.7l-3.8 6.9zM724 355.1h11l-3 5.5zM727.2 362.7h9.5l-2.6 4.8zM730.5 368.4h10.5l-2.9 5.3zM734.7 378.4h12.4l-3.4 6.3zM740.1 384.2h14.4l-4 7.3zM741.4 392.4h9.6l-2.6 4.8zM745.9 399.3h13.3l-3.7 6.7zM749.9 408.1h11.6l-3.2 5.8zM754.1 415.6h13.6l-3.7 6.8zM757.7 422.3h9.8l-2.7 4.9zM760.1 431h12.5l-3.4 6.3zM763.3 437.3h10.3l-2.8 5.2zM768.6 445.8h10l-2.8 5zM770.9 454.5h11l-3 5.6zM727.5 334.5h12.3l-3.4 6.2zM733.1 340.3h13.2l-3.7 6.7zM736.2 349.8h12.1l-3.4 6.1zM737.8 356h14.9l-4.1 7.5zM741.8 365.3h10l-2.8 5zM747.3 371.4h12.8l-3.5 6.5zM749.7 378.7h14.6l-4 7.3zM754.6 385.9h14l-3.9 7.1zM757.3 393.8h12.9l-3.6 6.5zM759.7 401.3h11.5l-3.2 5.8zM764.5 410.1h10.8l-3 5.5zM766.5 416.9h10.5l-2.9 5.3zM770.6 424.4h13.4l-3.7 6.8zM775.8 432.6h10.5l-2.9 5.3zM777.6 439.8h9.6l-2.7 4.9zM782.6 446.6h12.6l-3.5 6.4zM739.7 328h10.4l-2.9 5.3zM742.3 337h11.2l-3.1 5.6zM746.6 343h11.4l-3.1 5.7zM750.9 352.3h12l-3.3 6.1zM752.8 359.2h11.7l-3.2 5.9zM755.9 367.2h10.7l-3 5.4zM761.6 373.6h12.1l-3.3 6.1zM764.3 380.5h14.9l-4.1 7.5zM768.1 389.4h9.5l-2.6 4.8zM770.5 396.9h15.1l-4.2 7.6zM775.2 403.3h11.7l-3.2 5.9zM778.9 412.9h11.2l-3.1 5.6zM782.4 420.2h10.1l-2.8 5.1zM785.2 426h15.5l-4.3 7.8zM790.8 434.6h15.3l-4.2 7.7zM794.3 441.9h9.7l-2.7 4.9zM750.5 323.5h15.4l-4.2 7.8zM754.5 329.6h10.6l-2.9 5.4zM758.3 338.8h12.2l-3.4 6.1zM760.3 345.2h10.8l-3 5.4zM764.3 352.1h12.9l-3.6 6.5zM768.8 361.7h11.2l-3.1 5.6zM772 369h9.8l-2.7 5zM776.3 374.9h9.8l-2.7 5zM779.1 383.8h13.4l-3.7 6.8zM782.4 391.3h11.5l-3.2 5.8zM786.6 398.6h12.3l-3.4 6.2zM788.6 406.6h12.4l-3.4 6.3zM792.7 414.6h12.7l-3.5 6.4zM796.9 420.7h14.6l-4 7.4zM799.6 428.1h12.6l-3.5 6.4zM803.1 436.5h12.3l-3.4 6.2zM763.6 325.2h13.1l-3.6 6.6zM769 333.1h10.3l-2.8 5.2zM770.8 340h13.1l-3.6 6.6zM776.8 346.7h12.2l-3.4 6.2zM780.5 355.8h15.3l-4.2 7.7zM782 364.1h15.1l-4.2 7.6zM787.6 371.5h13l-3.6 6.5zM790.7 379.1h10.8l-3 5.5zM793.2 386.3h10.2l-2.8 5.1zM798.2 392.6h10.8l-3 5.5zM799.9 400.8h15.1l-4.2 7.6zM803.6 407.8h15.8l-4.4 8zM807.5 414.8h13.1l-3.6 6.6zM810.7 424.7h11l-3 5.5zM816.2 430.3h14.2l-3.9 7.2zM774.8 319.4h15.1l-4.2 7.6zM779 327.9h14.2l-3.9 7.1zM783.2 335.5h13.6l-3.8 6.9zM787.9 342.4h10.6l-2.9 5.4zM791 349.1h12.6l-3.5 6.3zM794 356.9h16.5l-4.6 8.3zM797.2 364.1h15l-4.1 7.6zM799.8 373.3h14.9l-4.1 7.5zM805 381.4h11.6l-3.2 5.9zM808.6 387.2h13.8l-3.8 7zM810.6 394.4h10l-2.8 5zM815.2 402.9h14l-3.9 7.1zM818 409.8h15.9l-4.4 8zM821.4 416.8h14.3l-3.9 7.2zM825.2 425.3h12.3l-3.4 6.2zM787 314h11.6l-3.2 5.9zM790.7 321.3h11.5l-3.2 5.8zM795.1 328.3h11l-3 5.6zM796.5 337h11.1l-3.1 5.6zM801.9 343.9h16l-4.4 8.1zM803.5 352.2h11.9l-3.3 6zM808 359.8h13.9l-3.8 7zM813.1 367.6h13.1l-3.6 6.6zM816.6 373.4h11.8l-3.3 6zM819 381.5h13.7l-3.8 6.9zM823.5 388.5h10.5l-2.9 5.3zM827.5 396.5h13.8l-3.8 7zM830.3 405h11.5l-3.2 5.8zM834.4 411.8h14.5l-4 7.3zM836.7 419h12.2l-3.4 6.2zM798.5 308.9h16.4l-4.5 8.3zM802.3 316.5h10.3l-2.9 5.2zM805.6 323.4h13.5l-3.7 6.8zM807.6 330.4h11.9l-3.3 6zM811.8 339.3h10.6l-2.9 5.3zM816.7 346.9h15.1l-4.2 7.6zM819.5 353.7h12.1l-3.4 6.1zM823.1 360.9h15.7l-4.3 7.9zM827.8 368.4h14.7l-4.1 7.4zM828.9 376.1h16.4l-4.5 8.3zM834.4 385.5h11.9l-3.3 6zM836.9 392.9h15.4l-4.3 7.8zM840.3 400.6h12.6l-3.5 6.3zM845.1 407.5h14.6l-4 7.4zM848.1 415.6h17l-4.7 8.6zM813.3 310.2h15.4l-4.2 7.7zM816.2 317.5h15.5l-4.3 7.8zM819.9 324.5h12l-3.3 6zM822.3 332h16.8l-4.7 8.5zM827.9 340.4h11.2l-3.1 5.7zM829.2 347.2h11.5l-3.2 5.8zM834.3 356.5h15.3l-4.2 7.7zM836.5 363.8h15.6l-4.3 7.9zM842 372h13l-3.6 6.6zM843.7 379.8h16.7l-4.6 8.4zM849.6 385.4h16.9l-4.7 8.5zM851 392.8h11.9l-3.3 6zM856.4 401.9h16.4l-4.5 8.3zM859.5 408.6h16.3l-4.5 8.2zM822.4 305.6h11.4l-3.1 5.7zM826.5 312.3h12.1l-3.3 6.1zM830 319.5h10.8l-3 5.5zM833.9 327.2h15.7l-4.3 7.9zM837.8 336.2h17.5l-4.8 8.8zM840.2 342.7h15.1l-4.2 7.6zM845.7 350.1h13.8l-3.8 6.9zM848.7 357.4h15.7l-4.3 7.9zM851.1 366.5h16.8l-4.6 8.5zM854.5 372.5h11.9l-3.3 6zM860.6 379.6h16.1l-4.4 8.1zM863 389.3h14.2l-3.9 7.1zM866.6 395.7h12l-3.3 6zM869.6 404.9h16.6l-4.6 8.4zM833.7 299.9h12.9l-3.6 6.5zM837 307.4h14.4l-4 7.3zM842.3 315.1h11.4l-3.2 5.8zM845.5 321.8h16.5l-4.6 8.3zM848.5 330.8h13.7l-3.8 6.9zM853.4 336.2h11.5l-3.2 5.8zM855.4 346h12.3l-3.4 6.2zM859.3 353.6h14.5l-4 7.3zM863.1 360.3h12.5l-3.5 6.3zM867.5 368.2h16.3l-4.5 8.2zM869.9 374.5h13.4l-3.7 6.7zM874.4 383.6h16.9l-4.7 8.6zM877.4 391.3h12.1l-3.3 6.1zM880.2 398.1h15l-4.2 7.6zM844.7 293.1h17.5l-4.8 8.8zM849.5 302.4h13.2l-3.7 6.7zM851.7 308.4h12.2l-3.4 6.1zM856.3 315.8h13.4l-3.7 6.8zM859 325.5h13.4l-3.7 6.8zM862.4 333.1h16.4l-4.5 8.3zM866.7 340.8h11.8l-3.2 5.9zM871.2 346.9h16.9l-4.7 8.5zM874.6 353.7h12.5l-3.4 6.3zM877.5 361.1h12.5l-3.5 6.3zM882.2 370.4h14l-3.9 7zM885.3 377.4h14.7l-4.1 7.4zM888.9 384.9h12.1l-3.3 6.1zM893.3 392.5h16.5l-4.5 8.3zM857 288.2h15.5l-4.3 7.8zM860.6 297h12.9l-3.6 6.5zM864.1 304.5h17l-4.7 8.6zM867.6 311.1h16.3l-4.5 8.2zM871.1 317.8h13.5l-3.7 6.8zM875.1 327h14.3l-4 7.2zM877.4 333.8h15.9l-4.4 8zM881.9 341.4h14.6l-4 7.4zM886.3 348.4h16.2l-4.5 8.2zM889.5 356.5h16.1l-4.4 8.1zM893.6 363.2h14.9l-4.1 7.5zM895.1 372.7h15.3l-4.2 7.7zM899.6 378.6h18.2l-5 9.2zM903.3 387.8h15.5l-4.3 7.8zM871.4 291.4h15.3l-4.2 7.7zM874.4 299.3h15.3l-4.2 7.7zM878.7 305.4h13l-3.6 6.5zM880.8 314.6h17.2l-4.7 8.7zM884.2 320.3h14.1l-3.9 7.1zM887.7 328.3h14.4l-4 7.3zM893.1 335.7h14.6l-4 7.4zM895.5 344.3h13.4l-3.7 6.8zM899.9 350.6h18.5l-5.1 9.3zM903.1 358.2h17.5l-4.8 8.8zM907.7 367.3h12.4l-3.4 6.2zM910.5 374.3h16.2l-4.5 8.2zM915.4 381.3h13.1l-3.6 6.6zM882.8 285.8h16.5l-4.5 8.3zM885.1 292.7h15.2l-4.2 7.7zM890.1 299.8h12.5l-3.5 6.3zM892.2 307.5h18.1l-5 9.1zM896.2 314.6h13.5l-3.7 6.8zM900.6 322.4h11.6l-3.2 5.8zM903.1 330.5h13.4l-3.7 6.8zM907.6 338.6h14.9l-4.1 7.5zM911.9 346.7h14.4l-4 7.2zM915.3 354.5h12l-3.3 6.1zM917.1 361.9h17.6l-4.9 8.9zM920.3 367.3h16.4l-4.5 8.3zM925.6 375.6h18.9l-5.2 9.5zM892.1 278.8h12.5l-3.5 6.3zM896.2 286.2h17.8l-4.9 9zM901 293.8h18.8l-5.2 9.5zM904.1 303h18.7l-5.2 9.4zM908.4 310.6h17l-4.7 8.6zM910.2 318h18.3l-5.1 9.2zM915.2 324.9h15.9l-4.4 8zM918.3 332.1h18.6l-5.1 9.4zM920.9 340.3h13.6l-3.7 6.8zM925.3 347h12.2l-3.4 6.2zM929 355.6h15.6l-4.3 7.9zM931.3 364h18.5l-5.1 9.3zM936.4 371.1h15.4l-4.3 7.8zM903.7 273.8h18.6l-5.1 9.4zM906.5 282h19.5l-5.4 9.9zM910 289.5h17l-4.7 8.6zM915.9 296.4h17.3l-4.8 8.7zM918.4 304.4h19.7l-5.4 9.9zM920.8 312.6h19l-5.3 9.6zM925.2 320.5h16.9l-4.7 8.5zM929.1 327.3h14.8l-4.1 7.5zM932 334.6h18l-5 9.1zM936.5 343.2h15.3l-4.2 7.7zM940.9 349.7h14.2l-3.9 7.2zM943 357.6h15.9l-4.4 8zM947.6 366h19.7l-5.4 9.9zM914.5 268h14.8l-4.1 7.4zM919 276.8h16.8l-4.6 8.5zM922.8 284.7h12.4l-3.4 6.3zM924.6 290.8h16.5l-4.6 8.3zM928.6 300h12.1l-3.4 6.1zM933.4 307.3h17l-4.7 8.6zM936.9 314.4h19.4l-5.4 9.8zM940.7 322h17.1l-4.7 8.7zM943.1 329.7h17.6l-4.9 8.9zM948.1 335.9h15.8l-4.4 8zM949.8 345.2h13.6l-3.7 6.8zM955 351.8h19.5l-5.4 9.8zM958.9 359.9h18.7l-5.2 9.5zM929.1 270.4h14.4l-4 7.3zM933 278.6h14.9l-4.1 7.5zM935.6 286h19.9l-5.5 10zM939.4 294.2h12.6l-3.5 6.4zM945.1 300.9h17l-4.7 8.6zM947.3 308.8h12.4l-3.4 6.3zM952.5 316.1h19.9l-5.5 10.1zM953.8 324.2h15.6l-4.3 7.9zM957.5 330.1h14l-3.9 7.1zM962.5 338h12.3l-3.4 6.2zM964.5 347.6h20.2l-5.6 10.2zM967.9 354.8h13.3l-3.7 6.7zM941.2 264.3h14.5l-4 7.3zM944.9 273.3h12.9l-3.6 6.5zM948.4 279.2h19.5l-5.4 9.9zM951.9 287.8h17.7l-4.9 8.9zM954.4 296.7h20.2l-5.6 10.2zM957.3 301.8h18.4l-5.1 9.3zM963 309.6h17.9l-4.9 9zM966.4 317.4h15l-4.2 7.6zM969.4 324.8h19.6l-5.4 9.9zM973.2 333.3h15.5l-4.3 7.8zM975.7 341.9h18.1l-5 9.1zM980.6 349h15.5l-4.3 7.8zM951.3 260.3h16.1l-4.4 8.1zM955.9 267.4h20.5l-5.7 10.4zM957.7 276h15.1l-4.2 7.6zM963.3 282h18.5l-5.1 9.3zM967.2 290.9h17.7l-4.9 8.9zM969.1 297.4h17.6l-4.9 8.9zM972.9 305.7h20.1l-5.5 10.1zM977.8 313.6h17.7l-4.9 8.9zM979.1 319.8h15l-4.1 7.6zM984.2 328.8h16.1l-4.5 8.2zM986.4 336.5h20.1l-5.5 10.1zM963.6 254.3h19.4l-5.4 9.8zM967.1 262.5h14.9l-4.1 7.5zM970.9 268.9h18.4l-5.1 9.3zM973.5 277.7h13.3l-3.7 6.7zM977.7 285.6h14.3l-3.9 7.2zM980.9 292.6h14.6l-4 7.4zM983.4 299.1h16.5l-4.6 8.3zM988.6 307.2h18.9l-5.2 9.5zM992.2 315.6h13.3l-3.7 6.7zM995.2 323.5h14.6l-4 7.3zM998.7 330h20l-5.5 10.1zM972.8 247.8h17.6l-4.8 8.9zM977.7 255.8h14.1l-3.9 7.1zM980.5 263.8h17.3l-4.8 8.8zM983.2 272.7h13.9l-3.8 7zM987 279.3h15.7l-4.3 7.9zM990.7 286.9h19.2l-5.3 9.7zM995.3 293h15.5l-4.3 7.8zM1000.1 302.8h12.9l-3.6 6.5zM1002.6 308.8h16.7l-4.6 8.4zM1005.8 318.2h19.1l-5.3 9.7zM1010.4 325.8h19l-5.3 9.6zM987 249.9h14.7l-4.1 7.4zM990.7 257.1h14.1l-3.9 7.1zM996.4 265.8h17.3l-4.8 8.7zM1000.1 272.4h20.6l-5.7 10.4zM1002.3 280.1h17.6l-4.9 8.9zM1005.6 288.9h20.7l-5.7 10.4zM1011 296.7h18l-5 9.1zM1013.3 303h15.9l-4.4 8zM1018.3 310.8h20.7l-5.7 10.5zM1020 318.7h12.9l-3.6 6.5zM1000.3 246.1h20.2l-5.6 10.2zM1003.5 253.3h13l-3.6 6.6zM1007.7 259.2h18l-5 9.1zM1010.7 269.1h13.8l-3.8 7zM1013.1 275.8h18.3l-5.1 9.2zM1016.2 282.7h19l-5.2 9.6zM1019.8 290.8h14.8l-4.1 7.4zM1023.7 297.5h14l-3.9 7.1zM1026.7 306.6h18.3l-5.1 9.2zM1030.4 314.7h14.2l-3.9 7.2zM1011.3 240.7h14.5l-4 7.3zM1012.9 247.2h20.1l-5.5 10.1zM1018.5 255.8h13.4l-3.7 6.8zM1020.9 262.1h17.9l-4.9 9zM1024.5 270.4h19.5l-5.4 9.8zM1027.5 276.5h13.8l-3.8 7zM1031.9 284.4h18.6l-5.1 9.4zM1034.8 292.7h19.9l-5.5 10.1zM1038.4 301.4h13.9l-3.8 7zM1041.7 308.1h15.4l-4.3 7.8zM1022.2 233.2h15.3l-4.2 7.7zM1023.6 242.8h20.8l-5.8 10.5zM1027.6 249.3h18.2l-5 9.2zM1031.4 256.2h15l-4.1 7.6zM1036.9 265.9h15.7l-4.3 7.9zM1038.2 271.7h20.4l-5.6 10.3zM1041.6 280.4h20.1l-5.6 10.2zM1047.6 286.1h15.1l-4.2 7.6zM1049.6 294.1h19.4l-5.4 9.8zM1054.5 302.7h12.6l-3.5 6.4zM1032 229.8h14.2l-3.9 7.1zM1036 235.4h14.4l-4 7.3zM1040.1 244.5h14.1l-3.9 7.1zM1041.9 250.4h14.3l-3.9 7.2zM1046.6 258.5h17.7l-4.9 8.9zM1050.5 267.2h14.3l-4 7.2zM1054 273.5h19.4l-5.4 9.8zM1058 281.7h13.2l-3.6 6.6zM1059.8 290.3h18.7l-5.2 9.4zM1065.5 298h15.4l-4.3 7.8zM1045.5 231.9h16.7l-4.6 8.5zM1051.4 237.8h16.6l-4.6 8.4zM1054.9 245.7h14.2l-3.9 7.1zM1057.3 253.8h14l-3.9 7.1zM1061.3 261.1h12.6l-3.5 6.4zM1063.8 269.4h16.9l-4.7 8.5zM1069.4 275.9h19.5l-5.4 9.8zM1071.7 284.7h18.6l-5.1 9.4zM1076.6 292.8h13.1l-3.6 6.6zM1057.8 225.4h16.8l-4.6 8.5zM1060.2 234.1h17.1l-4.7 8.6zM1064.2 239.5h14.5l-4 7.3zM1069.4 246.9h14.7l-4.1 7.4zM1072.7 254.9h13.4l-3.7 6.8zM1076.1 263.5h12.7l-3.5 6.4zM1079.9 269.9h17l-4.7 8.6zM1083.6 277.3h19.9l-5.5 10zM1086.6 286.1h13.6l-3.8 6.9zM1089.2 293.5h14.9l-4.1 7.5zM1094 302.2h13.8l-3.8 6.9zM1069 220.4h13.8l-3.8 7zM1073.2 228.5h14l-3.9 7.1zM1075.8 235.9h15.9l-4.4 8zM1079.3 243.7h17l-4.7 8.6zM1082.8 249.5h19.1l-5.3 9.7zM1086.6 259.1h15.4l-4.3 7.8zM1091.5 266.2h19.4l-5.3 9.8zM1092.8 273h19.7l-5.4 10zM1098.7 279.9h20.6l-5.7 10.4zM1101.5 287.8h16.1l-4.5 8.1zM1103.7 295.6h17.1l-4.7 8.6zM1107.2 302.5h16.8l-4.7 8.5zM1112.7 312.1h20.7l-5.7 10.5zM1116.4 319.6h17.9l-4.9 9zM1118 326.6h20l-5.5 10.1zM1123.3 333.2h14.8l-4.1 7.5zM1127.5 341.7h17.2l-4.7 8.7zM1130.1 348.8h14.7l-4.1 7.4zM1133 356.1h20.6l-5.7 10.4zM1078.8 214.5h18l-5 9.1zM1083.4 221.3h20.6l-5.7 10.4zM1087.1 228.6h16.5l-4.6 8.3zM1089.6 236.6h13.6l-3.8 6.9zM1093.6 244h16l-4.4 8.1zM1097.9 253.2h13.3l-3.7 6.7zM1101.6 260.3h17.7l-4.9 8.9zM1105.5 267.4h14.3l-3.9 7.2zM1108.9 275h17.2l-4.8 8.7zM1111.5 282h15.2l-4.2 7.7zM1115.5 290.5h16.9l-4.7 8.5zM1119 298.8h12.7l-3.5 6.4zM1123.1 305.5h14.6l-4 7.4zM1127.9 312.6h15l-4.1 7.6zM1129.3 319.6h19.1l-5.3 9.6zM1133.6 327.2h19.9l-5.5 10.1zM1137.2 336.5h15.9l-4.4 8zM1140.3 344.7h13.5l-3.7 6.8zM1143.7 350.7h18.8l-5.2 9.5zM1148.7 359h15.6l-4.3 7.9zM1095.2 216.4h19.7l-5.5 10zM1098.6 224.7h18.8l-5.2 9.5zM1102.3 232.1h16.6l-4.6 8.4zM1104.2 240.2h20.3l-5.6 10.2zM1109.5 247h12.6l-3.5 6.4zM1113.6 254.6h16.8l-4.6 8.5zM1116.7 263h16.1l-4.4 8.1zM1119.3 269.5h17.7l-4.9 8.9zM1123.8 276.7h16.4l-4.5 8.3zM1126.9 284.5h15.9l-4.4 8zM1131.1 293.3h15.3l-4.2 7.7zM1133.9 299.2h16.8l-4.6 8.5zM1136.7 307.8h15.2l-4.2 7.6zM1140.1 316.3h17.5l-4.8 8.8zM1145.7 323.7h15.3l-4.2 7.7zM1147.6 330.2h20.7l-5.7 10.4zM1150.7 336.8h20.2l-5.6 10.2zM1155.6 346.7h17.3l-4.8 8.8zM1159.3 354.5h19.1l-5.3 9.6zM1109 219h16.9l-4.7 8.6zM1112.2 226.3h15.9l-4.4 8zM1117.4 234.2h15.5l-4.3 7.8zM1118.8 241h17l-4.7 8.6zM1123.6 249.1h16l-4.4 8.1zM1128.2 256.5h20l-5.5 10.1zM1130.9 265.4h16.3l-4.5 8.2zM1134.3 272.5h15.5l-4.3 7.8zM1137.3 280.5h14l-3.9 7.1zM1141.4 285.9h19.5l-5.4 9.9zM1145.5 295.3h20.1l-5.6 10.2zM1149.6 301.9h20.9l-5.8 10.6zM1151.7 309.7h13.9l-3.8 7zM1155 316.5h16.8l-4.7 8.5zM1159.7 324.5h17.9l-4.9 9zM1163.4 331.3h20.9l-5.8 10.6zM1167.3 339.6h16.1l-4.4 8.1zM1168.9 347.2h18.4l-5.1 9.3zM1174 355.7h19.7l-5.4 9.9zM1130.8 235.9h14.3l-3.9 7.2zM1134.8 243.5h14.8l-4.1 7.5zM1138.2 250.8h21l-5.8 10.6zM1140.7 259.3h13.6l-3.8 6.9zM1144.2 265.3h13.5l-3.7 6.8zM1149.6 274.1h17l-4.7 8.6zM1151.3 280.1h19.4l-5.4 9.8zM1155.5 289.6h19.1l-5.3 9.6zM1158.7 296h15.6l-4.3 7.9zM1164.3 304.4h13.4l-3.7 6.8zM1166.7 311.5h15.5l-4.3 7.8zM1171.4 319.6h13.1l-3.6 6.6zM1173.8 327.3h20.7l-5.7 10.4zM1176.4 335.7h14.7l-4.1 7.4zM1180.7 343.2h19.8l-5.5 10zM1184.3 350.1h19.5l-5.4 9.8zM1159.8 269.5h20.7l-5.7 10.4zM1163.1 276.5h14.6l-4 7.4zM1166.5 284.5h14.5l-4 7.3zM1171.4 290.4h16.7l-4.6 8.4zM1173.8 297.9h14.1l-3.9 7.1zM1177.3 306.5h20.8l-5.7 10.5zM1181.5 313.6h13.6l-3.7 6.8zM1183.9 320.5h16l-4.4 8.1zM1188.2 328.4h19.5l-5.4 9.9zM1191.6 336h14.2l-3.9 7.2zM1196.2 343.9h12.9l-3.6 6.5zM1199.9 350.8h13.9l-3.8 7z" fill="#2a97f5"/></g>
<clipPath id="cFoot"><path d="M507.200 530 L507.200 435 Q507.200 432 510 430.500 L544.400 414.500 Q550.500 412 555.600 415.500 L561.200 422.900 L566.700 426.600 L569 436 L567 438 L572 446 L570 448 L575 457 L573 459 L578 468 L576 470 L581 480 L579 482 L584 492 L582 494 L587 503 L585 505 L590 514 L588 516 L593 524 L591 526 L597 530 L540 562 Q533 566 528 564 Q523 562.500 519.500 556.500 L510.500 541.500 L508 530Z"/></clipPath>
<path d="M507.200 530 L507.200 435 Q507.200 432 510 430.500 L544.400 414.500 Q550.500 412 555.600 415.500 L561.200 422.900 L566.700 426.600 L569 436 L567 438 L572 446 L570 448 L575 457 L573 459 L578 468 L576 470 L581 480 L579 482 L584 492 L582 494 L587 503 L585 505 L590 514 L588 516 L593 524 L591 526 L597 530 L540 562 Q533 566 528 564 Q523 562.500 519.500 556.500 L510.500 541.500 L508 530Z" fill="#7197b7"/>
<g clip-path="url(#cFoot)"><path d="M502 540.2h9.6l-1.3 -3.9zM502.1 550.1h9.8l-1.3 -4zM496.5 508.3h8.4l-1.1 -3.4zM510.8 527.7h11.6l-1.6 -4.7zM517.2 541.3h7.1l-1 -2.9zM518.7 553.6h8.1l-1.1 -3.3zM526.1 565.3h11l-1.5 -4.5zM498.2 472.3h10.1l-1.4 -4.1zM519.7 517.7h8.1l-1.1 -3.3zM529.3 543.2h11l-1.5 -4.5zM541.5 558.1h8l-1.1 -3.3zM498.8 440.7h7.4l-1 -3zM501.5 451.3h7.4l-1 -3zM509.1 465.2h8.2l-1.1 -3.3zM520.2 485.6h9.6l-1.3 -3.9zM527.2 506.1h10l-1.4 -4.1zM536.8 517.2h8.3l-1.1 -3.4zM536.8 525.4h11.1l-1.5 -4.6zM550.3 553.3h11.6l-1.6 -4.8zM508.4 432h8.4l-1.1 -3.4zM516.1 443.1h8.1l-1.1 -3.3zM519.9 455.2h11.5l-1.6 -4.7zM531.5 474.1h7.7l-1.1 -3.2zM534.9 484.4h7.9l-1.1 -3.2zM540.3 493.3h11.5l-1.6 -4.7zM539.7 503.3h7.5l-1 -3.1zM545.5 513.2h10.3l-1.4 -4.2zM549.6 521.3h8.4l-1.1 -3.4zM556.4 531.4h8.1l-1.1 -3.3zM563.2 546.7h11.3l-1.5 -4.6zM516.9 418.3h9.1l-1.2 -3.7zM521.8 429.1h9.7l-1.3 -4zM543.7 473.7h7.7l-1 -3.1zM564.4 517h10l-1.4 -4.1zM566.5 526.1h11.7l-1.6 -4.8zM552.9 455.9h10.2l-1.4 -4.2zM557.2 463.8h10.7l-1.5 -4.4zM564.7 479.5h9.7l-1.3 -4zM587 529.4h10.4l-1.4 -4.3zM542.7 411.4h10.5l-1.4 -4.3zM551.2 419.3h8.1l-1.1 -3.3zM562.3 448.5h7.1l-1 -2.9zM570.4 458.2h7.8l-1.1 -3.2zM571.5 469.1h11.2l-1.5 -4.6zM578.8 479.2h9l-1.2 -3.7zM584.9 493.8h9.7l-1.3 -4zM592.6 507.2h10.9l-1.5 -4.5z" fill="#bcc0c4"/><path d="M507.2 550.8h1.8l-0.5 -1.1zM504 532.4h2.3l-0.6 -1.5zM506.4 537.9h2.8l-0.7 -1.7zM514.1 540h2.3l-0.6 -1.4zM515.1 547.4h2.9l-0.7 -1.8zM521.8 567.8h2.3l-0.6 -1.4zM498.3 499.2h2.6l-0.7 -1.6zM524.8 549.5h2.7l-0.7 -1.7zM504.2 491.4h2.1l-0.5 -1.3zM513.6 511.4h2.8l-0.7 -1.7zM516.3 519.1h2.3l-0.6 -1.4zM518.1 525.2h2.5l-0.6 -1.5zM522.1 531.2h2.1l-0.5 -1.3zM524.3 535.7h2.4l-0.6 -1.5zM496.2 454.5h2.9l-0.7 -1.8zM507.6 474.4h2.1l-0.5 -1.3zM506.2 482.3h1.8l-0.5 -1.1zM522.7 509.9h2.2l-0.5 -1.4zM526.9 521.8h2.4l-0.6 -1.5zM532.4 525.8h2.9l-0.7 -1.8zM531.7 536.9h2.8l-0.7 -1.8zM543.5 560.9h2.1l-0.5 -1.3zM500.5 445.2h2.9l-0.7 -1.8zM541.4 531.3h2.2l-0.6 -1.4zM545.4 539.4h2.7l-0.7 -1.7zM503.9 439.5h2.2l-0.6 -1.4zM518.2 462.4h2.4l-0.6 -1.5zM518.9 470.5h2.3l-0.6 -1.4zM521.9 476.9h1.9l-0.5 -1.2zM537.7 506.6h2.4l-0.6 -1.5zM543 524h2.1l-0.5 -1.3zM545.7 526.1h2.2l-0.6 -1.4zM553 542.5h2.9l-0.7 -1.8zM556.6 549.5h2.4l-0.6 -1.5zM561.1 556h2.4l-0.6 -1.5zM507.6 420.4h2.4l-0.6 -1.5zM529.2 471.8h2.4l-0.6 -1.5zM533.3 477.8h2.1l-0.5 -1.3zM534.7 488.8h2.8l-0.7 -1.7zM551.8 520.3h2l-0.5 -1.2zM565.3 550.2h2.3l-0.6 -1.4zM517.5 433.6h2l-0.5 -1.3zM527.2 446.2h2.8l-0.7 -1.8zM536.2 465.2h2l-0.5 -1.2zM534.1 469.1h2.9l-0.7 -1.8zM538 477.5h2l-0.5 -1.3zM541.1 481.6h2l-0.5 -1.3zM552.2 502.3h2.6l-0.7 -1.6zM531.9 443.5h2.9l-0.7 -1.8zM556.6 496.7h1.9l-0.5 -1.2zM560.5 503.3h1.8l-0.5 -1.1zM529.6 411.6h2.1l-0.5 -1.3zM529.5 419h2.7l-0.7 -1.7zM530.5 425.4h2.1l-0.5 -1.3zM551.6 465.3h2.9l-0.7 -1.8zM553.9 471.7h2.1l-0.5 -1.3zM565.2 492.8h2.3l-0.6 -1.4zM569.2 502.3h2.5l-0.6 -1.6zM572.7 507.2h2.3l-0.6 -1.4zM581.6 536.9h2.3l-0.6 -1.4zM534.6 409.5h2.5l-0.6 -1.5zM543 420.9h2.2l-0.6 -1.4zM547.2 440.4h2.3l-0.6 -1.4zM553.8 453.8h2.9l-0.7 -1.8zM567.6 485.6h2.6l-0.7 -1.6zM580.7 515h2.3l-0.6 -1.5zM585.8 520.1h2l-0.5 -1.3zM566.4 458h2.4l-0.6 -1.5zM582.3 491.9h1.8l-0.5 -1.1zM591.5 515.6h2.8l-0.7 -1.8zM592.3 520.2h2.3l-0.6 -1.4zM596 527.1h2.2l-0.5 -1.4zM568.2 444.3h2.1l-0.5 -1.3zM579.6 468.6h2.9l-0.7 -1.8zM586.4 478.7h2.4l-0.6 -1.5zM566 420.6h2.8l-0.7 -1.8zM569.2 431.9h2.4l-0.6 -1.5zM573.1 439.7h2.9l-0.7 -1.8z" fill="#bcc0c4"/></g>
<clipPath id="cGrey"><path d="M950 275 L957 270 L962 264.200 L1040 238.100 L1086 222.800 Q1098 219 1106 221.500 Q1110 223 1114 227 L1123.300 236.300 L1145.600 260 L1200 343 L1200 346.800 L1146.500 355 L1099 291 Q1093 284.500 1085 289.500 L1079 291 L1056 286.500 L1036 283 L1017 279.500 L998 274 L972 274.500Z"/></clipPath>
<path d="M950 275 L957 270 L962 264.200 L1040 238.100 L1086 222.800 Q1098 219 1106 221.500 Q1110 223 1114 227 L1123.300 236.300 L1145.600 260 L1200 343 L1200 346.800 L1146.500 355 L1099 291 Q1093 284.500 1085 289.500 L1079 291 L1056 286.500 L1036 283 L1017 279.500 L998 274 L972 274.500Z" fill="#b4b6b8"/>
<g clip-path="url(#cGrey)"><path d="M958.7 262.9h12.6l-3 -6.3zM962.4 268h10.2l-2.4 -5.1zM964.5 277.1h9.2l-2.2 -4.6zM970.7 284.8h12.2l-2.9 -6zM970.4 258.5h13.8l-3.3 -6.8zM973.1 267h14.9l-3.6 -7.4zM977.8 271.7h12.5l-3 -6.2zM981.7 280.1h11.9l-2.8 -5.9zM979.7 250.6h12.9l-3.1 -6.4zM983.4 258.5h14l-3.3 -6.9zM987.3 265.6h9.3l-2.2 -4.6zM991.3 272.9h11.1l-2.6 -5.5zM995.6 281.7h13.8l-3.3 -6.8zM996.4 255.7h13.8l-3.3 -6.8zM1000.9 261.7h12.3l-2.9 -6.1zM1004.6 277.5h14.9l-3.6 -7.4zM1010.7 286.8h13.9l-3.3 -6.9zM1013.8 294.9h14.8l-3.5 -7.3zM1008.5 247.1h11.1l-2.7 -5.5zM1010.1 253.2h9.5l-2.3 -4.7zM1021.1 276h9.7l-2.3 -4.8zM1023.6 286.7h14l-3.3 -6.9zM1019.2 243.4h11.1l-2.6 -5.5zM1025.6 258.8h11.5l-2.7 -5.7zM1027.6 264.2h10.5l-2.5 -5.2zM1032.2 274.5h12.4l-3 -6.2zM1034.9 281.2h12.9l-3.1 -6.4zM1041 285.7h10.6l-2.5 -5.2zM1041.7 296.1h12.3l-2.9 -6.1zM1029.5 234.9h11.8l-2.8 -5.8zM1030.8 247h13.8l-3.3 -6.8zM1034.5 252.6h13.2l-3.1 -6.5zM1040.2 258.6h9.6l-2.3 -4.7zM1043.2 267.7h12.3l-2.9 -6.1zM1044.9 277.8h14.5l-3.4 -7.2zM1054.5 291.5h13.7l-3.3 -6.8zM1056.8 296.5h11l-2.6 -5.4zM1042.9 240.1h11.4l-2.7 -5.6zM1045.8 246.1h12.4l-3 -6.1zM1049.5 254.9h10.4l-2.5 -5.1zM1053.9 259.3h9.7l-2.3 -4.8zM1059 268.4h11.7l-2.8 -5.8zM1065.3 284.4h15l-3.6 -7.4zM1067.8 290.3h10.7l-2.6 -5.3zM1073 298.3h9.6l-2.3 -4.8zM1052.5 234.7h10.8l-2.6 -5.4zM1059.7 241.9h10.1l-2.4 -5zM1061.8 246h9.2l-2.2 -4.5zM1065.8 256.7h11.9l-2.8 -5.9zM1069 265.4h14l-3.3 -6.9zM1070.6 272h9.9l-2.3 -4.9zM1075.1 279.5h11.6l-2.8 -5.8zM1079.1 287.4h14.2l-3.4 -7.1zM1084.7 294.5h13.6l-3.2 -6.7zM1077.1 251.9h11.4l-2.7 -5.6zM1080.5 259.3h11.4l-2.7 -5.7zM1082.8 263.5h10.3l-2.5 -5.1zM1088.1 273.9h11.6l-2.8 -5.8zM1089.7 281.3h10.5l-2.5 -5.2zM1095.3 288.3h10.1l-2.4 -5zM1100.9 305h12.8l-3.1 -6.3zM1110.3 328.1h11.7l-2.8 -5.8zM1113.8 332.4h11.4l-2.7 -5.6zM1120.2 344.4h14.9l-3.6 -7.4zM1074.9 222.4h10.7l-2.5 -5.3zM1079.9 230.7h12.6l-3 -6.2zM1083.3 235.2h9.5l-2.3 -4.7zM1087.5 245.9h10.9l-2.6 -5.4zM1089.4 252.6h12.3l-2.9 -6.1zM1097.8 267.8h10.8l-2.6 -5.3zM1103.3 273.4h10.8l-2.6 -5.4zM1106.6 282.3h12.5l-3 -6.2zM1109.3 290.9h14.8l-3.5 -7.3zM1117.7 313.2h14.1l-3.3 -7zM1124.8 322.7h13.4l-3.2 -6.6zM1126.9 330.4h10.7l-2.5 -5.3zM1129 338.7h14.3l-3.4 -7.1zM1135.1 341.7h9.5l-2.3 -4.7zM1138.1 349.1h9.4l-2.2 -4.7zM1091.8 226h13.9l-3.3 -6.9zM1094.9 231.8h13.9l-3.3 -6.9zM1098.3 239.6h11.2l-2.7 -5.5zM1103.5 255.5h14.2l-3.4 -7zM1110.1 261.9h12.8l-3 -6.3zM1111 269.8h13.9l-3.3 -6.9zM1116.5 279.1h14.9l-3.6 -7.4zM1119.7 286.7h13.9l-3.3 -6.9zM1124.4 295.8h14.7l-3.5 -7.3zM1128.1 302h12.7l-3 -6.3zM1137 322.4h12.1l-2.9 -6zM1142.3 331h15l-3.6 -7.4zM1146.3 338.2h11.3l-2.7 -5.6zM1147.4 344.7h12.4l-2.9 -6.1zM1153.1 356.4h15l-3.6 -7.4zM1156.1 362.8h12.4l-3 -6.2zM1103.5 217h9.4l-2.2 -4.6zM1106.5 226.1h11.9l-2.8 -5.9zM1108.9 235.4h11.6l-2.8 -5.8zM1112.1 243.5h13.1l-3.1 -6.5zM1118 248.9h14.4l-3.4 -7.1zM1121.8 266.4h13.2l-3.2 -6.6zM1128.9 274.6h12.8l-3.1 -6.4zM1129.2 280.5h14.6l-3.5 -7.3zM1136 288.3h12.2l-2.9 -6zM1139.6 295.2h12.8l-3 -6.3zM1141 302.5h12.7l-3 -6.3zM1144.3 308.2h9.1l-2.2 -4.5zM1148 319.7h12l-2.9 -5.9zM1153.6 325.3h13.1l-3.1 -6.5zM1154.7 335.5h12.7l-3 -6.3zM1158.4 340.4h14.4l-3.4 -7.1zM1162 350.8h13.2l-3.2 -6.6zM1121.9 229h15l-3.6 -7.4zM1124.5 236.7h13.6l-3.2 -6.7zM1128.6 242.6h12.6l-3 -6.2zM1132 249.7h11l-2.6 -5.4zM1132.9 258h9.8l-2.3 -4.8zM1142.3 272.7h9.7l-2.3 -4.8zM1145 283.9h13.6l-3.2 -6.7zM1149.8 292.4h14.2l-3.4 -7zM1152.4 297.8h10.8l-2.6 -5.3zM1157.4 307h13.5l-3.2 -6.7zM1157.8 312.9h12.9l-3.1 -6.4zM1164.6 321.2h14.6l-3.5 -7.2zM1167.4 327.7h14.4l-3.4 -7.1zM1170.7 334.9h14.4l-3.4 -7.1zM1178.8 350.4h13.6l-3.2 -6.8zM1181.6 356.9h10.1l-2.4 -5zM1144.2 252.3h9.8l-2.3 -4.8zM1150.9 262.7h11.5l-2.7 -5.7zM1151.5 269h14.1l-3.4 -7zM1155 274.4h10.8l-2.6 -5.4zM1161.4 281.5h10.2l-2.4 -5.1zM1164.3 289h10.3l-2.5 -5.1zM1165.1 299.8h13.5l-3.2 -6.7zM1171.1 305.4h12l-2.9 -5.9zM1176.3 321.5h13.7l-3.3 -6.8zM1180.4 327.2h9.6l-2.3 -4.7zM1185.1 338.5h14.2l-3.4 -7zM1186.8 344.2h13.9l-3.3 -6.9zM1192.2 351.7h9.1l-2.2 -4.5zM1192 322.1h9.1l-2.2 -4.5zM1197 332.4h9.3l-2.2 -4.6zM1200.9 341.5h13.1l-3.1 -6.5z" fill="#6c99be"/></g>
<clipPath id="cBlob"><path d="M717 355 Q721 347 728 343 L736 340.200 L753 338 L757 336.300 L784 333.500 L783 338 L780 344 L776 352 L773 359 L768 366 L764 374 L760 381 L755 387 L752 395 L746 400 L741 401 L733 397 L728 390 L723 381 L717.900 377.700 L715 366.500 Q714.500 360 717 355Z"/></clipPath>
<path d="M717 355 Q721 347 728 343 L736 340.200 L753 338 L757 336.300 L784 333.500 L783 338 L780 344 L776 352 L773 359 L768 366 L764 374 L760 381 L755 387 L752 395 L746 400 L741 401 L733 397 L728 390 L723 381 L717.900 377.700 L715 366.500 Q714.500 360 717 355Z" fill="#b4b6b8"/>
<g clip-path="url(#cBlob)"><path d="M705.4 373.3h8.7l-3.5 -4.5zM709.1 382.1h12.6l-5 -6.5zM714.6 388.4h10l-4 -5.2zM717.9 397.5h12.9l-5.2 -6.7zM720.8 405.3h11.7l-4.7 -6.1zM709.2 354.4h14.4l-5.7 -7.5zM713.7 362.4h14l-5.6 -7.3zM717.2 370.4h10.5l-4.2 -5.5zM720.4 376.6h9.8l-3.9 -5.1zM726.2 385.9h11.8l-4.7 -6.1zM727.5 393h10.7l-4.3 -5.5zM730.6 402.1h14.3l-5.7 -7.4zM736.1 407.8h13.6l-5.4 -7.1zM718.5 341.2h13.2l-5.3 -6.9zM720.6 347.9h12.3l-4.9 -6.4zM724.5 355.7h10.6l-4.2 -5.5zM729.6 365.9h12.3l-4.9 -6.4zM733.7 374h14.2l-5.7 -7.4zM734.8 379.1h10.4l-4.2 -5.4zM739.9 385.8h11.8l-4.7 -6.1zM744.3 393.9h9.7l-3.9 -5.1zM745.4 402.4h12.6l-5 -6.6zM750.6 412.4h13.9l-5.5 -7.2zM732.3 343.4h9.8l-3.9 -5.1zM736.9 351h11.2l-4.5 -5.8zM738.4 358.9h9.3l-3.7 -4.8zM742.3 364.5h9.3l-3.7 -4.8zM747.9 374.3h12.7l-5.1 -6.6zM751.3 380.7h11.5l-4.6 -6zM754.3 389h10.8l-4.3 -5.6zM756.4 394.1h8.8l-3.5 -4.6zM744 340h12.8l-5.1 -6.7zM746.3 347.1h13l-5.2 -6.8zM750.1 353.1h14.3l-5.7 -7.4zM753.5 359.3h10.8l-4.3 -5.6zM756.7 368h8.9l-3.6 -4.6zM761.7 373.7h8.9l-3.6 -4.6zM766 382h9.7l-3.9 -5.1zM757.9 339.6h9.7l-3.9 -5zM762.7 347.4h11.6l-4.7 -6.1zM765.9 355.1h11.6l-4.7 -6.1zM768.7 362.3h12.7l-5.1 -6.6zM773.2 370h9.3l-3.7 -4.9zM769.6 336h14l-5.6 -7.3zM773.7 339.9h9.6l-3.8 -5zM775.1 349.1h11.1l-4.4 -5.8zM779.6 357.3h10.4l-4.2 -5.4zM782.8 337.5h11.7l-4.7 -6.1z" fill="#7198b8"/></g>
<path d="M507.200 530 L507.200 435 Q507.200 432 510 430.500 L544.400 414.500 Q550.500 412 555.600 415.500 L561.200 422.900 Q563.500 425.800 566.700 426.600 L572 428.500 Q577 430 579.800 435 L596.500 466.600 Q600 471.500 606 472.400 L612 472.400 Q616 471.500 630 464.800 L715 421 Q723 417 724.900 412.500 Q728 407 727 401.400 L724.200 393 L717.900 377.700 L715 366.500 Q714.500 360 717 355 Q721 347 728 343 L750.300 335.300 L1040 238.100 L1086 222.800 Q1098 219 1106 221.500 Q1110 223 1114 227 L1123.300 236.300 L1145.600 260 L1200 343 L1200 346.800 L1146.500 355 L1099 291 Q1093 284.500 1085 289.500 L760 453 L540 562 Q533 566 528 564 Q523 562.500 519.500 556.500 L510.500 541.500 L508 530Z" fill="none" stroke="#1c3048" stroke-width=".8"/>
<path d="M717 355 Q721 349 728 346 L750.300 338.500 L1040 241.300 L1086 225.900 Q1098 222 1106 224 Q1110 225 1114 228.500 L1123.300 236.300" fill="none" stroke="#2a3a4a" stroke-width=".7"/>
<path d="M708.400 347.300 L800 317.400 L1040 237.200 L1108 216" fill="none" stroke="#fff" stroke-width="1.400"/>
<path d="M495.500 489 L506.500 528" stroke="#fff" stroke-width="1.300"/>
<g fill="none" stroke="#1e2a36" stroke-width=".9"><circle cx="533.800" cy="541" r="2.600"/><circle cx="662.500" cy="442.500" r="2.800"/><circle cx="714.400" cy="388.100" r="2.500"/><circle cx="838.500" cy="387.500" r="2.600"/><circle cx="1141" cy="311" r="2.400"/></g>
<g fill="none" stroke="#1a1a1a" stroke-width=".9"><path d="M841 387 L886 377"/><path d="M716.800 387.200 L738 379.300"/><path d="M665 441 L680 434"/><path d="M1146 218 L1145 262 L1143.500 300 L1142 308" stroke-dasharray="5 1.500"/><path d="M1139 313 L1118 320 L1147 327"/></g>
</g>
<rect x="724.5" y="366.5" width="60.5" height="12" fill="#fff" stroke="#c8c8c8" stroke-width="1"/><rect x="731.5" y="370.2" width="7" height="5.600" fill="#3f78cc"/><text x="742.7" y="375.9" font-family="DejaVu Sans,Liberation Sans,sans-serif" font-size="9.500" font-weight="400" fill="#000" stroke="#000" stroke-width=".15" textLength="38" lengthAdjust="spacingAndGlyphs">Plane 3</text>
<rect x="672.5" y="420.5" width="60.5" height="12" fill="#fff" stroke="#c8c8c8" stroke-width="1"/><rect x="679.5" y="424.2" width="7" height="5.600" fill="#3f78cc"/><text x="690.7" y="429.9" font-family="DejaVu Sans,Liberation Sans,sans-serif" font-size="9.500" font-weight="400" fill="#000" stroke="#000" stroke-width=".15" textLength="38.5" lengthAdjust="spacingAndGlyphs">Plane 2</text>
<g font-family="DejaVu Sans,Liberation Sans,sans-serif" font-size="9.500">
<rect x="848.500" y="342.500" width="233.500" height="34.500" fill="#fff" stroke="#9a9a9a" stroke-width="1"/>
<rect x="849" y="343" width="232.500" height="11" fill="#c4c4c4"/>
<text x="852" y="352.300" font-weight="700" fill="#000" textLength="37" lengthAdjust="spacingAndGlyphs">Plane 1</text>
<g stroke="#b0b0b0" stroke-width="1"><path d="M849 354.500h232.500M849 365.500h232.500M968.500 354.500v22M1012 354.500v22M1039.500 354.500v22"/></g>
<rect x="855.600" y="357.500" width="7.400" height="4.800" fill="#3f78cc"/><path d="M864.500 354.500v11" stroke="#d0d0d0" stroke-width="1"/>
<text x="928" y="363.300" fill="#000" textLength="36.500" lengthAdjust="spacingAndGlyphs">Nominal</text>
<text x="980.500" y="363.300" fill="#000" textLength="27" lengthAdjust="spacingAndGlyphs">Actual</text>
<text x="1015.500" y="363.300" fill="#000" textLength="18.500" lengthAdjust="spacingAndGlyphs">Dev.</text>
<text x="1047" y="363.300" fill="#000" textLength="27.500" lengthAdjust="spacingAndGlyphs">Check</text>
<rect x="849.500" y="366.300" width="118" height="10.500" fill="#fff" stroke="#2a2a2a" stroke-width="1.100"/>
<path d="M863.500 366.300v10.500M887 366.300v10.500" stroke="#2a2a2a" stroke-width="1"/>
<path d="M851 374.500a5.500 5.500 0 0 1 11 0z" fill="none" stroke="#1a1a1a" stroke-width="1"/>
<text x="865" y="374.800" fill="#000" textLength="21" lengthAdjust="spacingAndGlyphs">3.00</text>
<text x="889" y="374.800" fill="#000" textLength="77.500" lengthAdjust="spacingAndGlyphs">No datum system</text>
<text x="988.500" y="374.800" fill="#000" textLength="19.500" lengthAdjust="spacingAndGlyphs">0.93</text>
<rect x="1043" y="368" width="35.500" height="6.500" fill="#fff" stroke="#d0d0d0" stroke-width=".8"/><path d="M1043.500 367.500v7.500M1043.500 371.300h9" stroke="#1a1a1a" stroke-width="1"/><rect x="1052.500" y="368.300" width="6" height="6" fill="#00d000" stroke="#1a1a1a" stroke-width=".9"/>
</g>
<rect x="1118.500" y="144.500" width="29" height="473.500" fill="#fff" fill-opacity=".04" stroke="#c4c4c4" stroke-width="1"/>
<rect x="1147.500" y="144" width="15.500" height="474" fill="url(#cbar)" stroke="#1a2a6a" stroke-width=".6"/>
<path d="M1147.500 144v474" stroke="#101010" stroke-width="1"/><path d="M1118.500 618h44.500" stroke="#303030" stroke-width="1"/>
<rect x="1148" y="126" width="15" height="15" fill="#830a0a"/>
<rect x="1148" y="621" width="15" height="14.500" fill="#060678"/>
<g font-family="DejaVu Sans,Liberation Sans,sans-serif" font-size="9" fill="#303030">
<text x="1165.500" y="153.5" textLength="24" lengthAdjust="spacingAndGlyphs">-2.40</text>
<path d="M1118.500 203.3h44.500" stroke="#b0b0b0" stroke-width=".8" opacity=".8"/>
<text x="1165.500" y="207.3" textLength="24" lengthAdjust="spacingAndGlyphs">-2.60</text>
<path d="M1118.500 262.3h44.500" stroke="#b0b0b0" stroke-width=".8" opacity=".8"/>
<text x="1165.500" y="266.3" textLength="24" lengthAdjust="spacingAndGlyphs">-2.80</text>
<path d="M1118.500 321.3h44.500" stroke="#b0b0b0" stroke-width=".8" opacity=".8"/>
<text x="1165.500" y="325.3" textLength="24" lengthAdjust="spacingAndGlyphs">-3.00</text>
<path d="M1118.500 380.3h44.500" stroke="#b0b0b0" stroke-width=".8" opacity=".8"/>
<text x="1165.500" y="384.3" textLength="24" lengthAdjust="spacingAndGlyphs">-3.20</text>
<path d="M1118.500 439.3h44.500" stroke="#b0b0b0" stroke-width=".8" opacity=".8"/>
<text x="1165.500" y="443.3" textLength="24" lengthAdjust="spacingAndGlyphs">-3.40</text>
<path d="M1118.500 498.3h44.500" stroke="#b0b0b0" stroke-width=".8" opacity=".8"/>
<text x="1165.500" y="502.3" textLength="24" lengthAdjust="spacingAndGlyphs">-3.60</text>
<path d="M1118.500 557.3h44.500" stroke="#2a2a2a" stroke-width=".8" opacity=".8"/>
<text x="1165.500" y="561.3" textLength="24" lengthAdjust="spacingAndGlyphs">-3.80</text>
<text x="1165.500" y="616" textLength="24" lengthAdjust="spacingAndGlyphs">-4.00</text>
<text x="1141.500" y="121.500" textLength="24.500" lengthAdjust="spacingAndGlyphs">[mm]</text>
</g>
<g stroke-linecap="butt">
<path d="M419 608.200 L476 580.800" stroke="#c01010" stroke-width="3.200"/><path d="M489.500 575.300 L473.500 577.300 L477.500 585.500Z" fill="#c01010"/>
<path d="M444.500 587.800 L467.500 594.200" stroke="#1a6a1a" stroke-width="4.200"/><path d="M440.500 586.500l7 1-2.500 4.500z" fill="#1a6a1a"/>
<path d="M438 555 L464 613" stroke="#0a0a9a" stroke-width="3.400"/><path d="M469.500 627 L459.500 614.500 L468 610.800Z" fill="#0a0a9a"/>
<g font-family="DejaVu Sans,Liberation Sans,sans-serif" font-size="7.500" fill="#3a3a3a"><text x="489.800" y="573.800">X</text><text x="442.500" y="587.500" fill="#4a4a4a">Y</text><text x="470.800" y="627.800">Z</text></g>
</g>
<rect x="639.500" y="596.500" width="320" height="26" fill="#fff" stroke="#cfdbe9" stroke-width="1"/>
<path d="M689.500 600.500v18" stroke="#cfd6de" stroke-width="1"/>
<g fill="none" stroke-width="1.200">
<rect x="648.500" y="604.500" width="7.500" height="6.500" stroke="#3a4048" stroke-width=".9" stroke-dasharray="1.400 1"/><path d="M654.500 608v7l1.800-1.600 1.300 2.600 1.100-.5-1.300-2.600h2.300z" fill="#24272b" stroke="none"/>
<path d="M675.300 603v13" stroke="#3a4048"/><rect x="670.300" y="605.500" width="2.400" height="8" fill="#3a4048" stroke="none"/><rect x="677.900" y="605.500" width="2.400" height="8" fill="#3a4048" stroke="none"/>
<g stroke="#2a5db0" stroke-width="1.400"><path d="M698.500 610.500h4.500v3.500h7"/><path d="M704.200 603v4"/></g><path d="M704.200 609.500l-2.300-3h4.600z" fill="#2a5db0"/>
<g stroke="#2a5db0" stroke-width="1.400"><path d="M720 609.500h12.500M726.300 603v2.500M726.300 612.500v3.500"/></g><path d="M726.300 608.300l-2-2.600h4zM726.300 610.700l-2 2.600h4z" fill="#2a5db0"/>
<g stroke="#2a5db0" stroke-width="1.200"><rect x="742.500" y="607.300" width="5" height="4.400"/><rect x="749.500" y="607.300" width="5" height="4.400"/><path d="M747.500 609.500h2"/></g>
<rect x="764.800" y="604" width="11" height="11" stroke="#2a5db0" stroke-width="1.500"/>
<g stroke="#2a5db0" stroke-width="1.200"><rect x="786.500" y="604.500" width="10" height="10"/><path d="M786.500 602.500v14M796.500 602.500v14"/><path d="M790 607v5h3.500" stroke-width="1.500"/></g>
<g stroke="#2a5db0" stroke-width="1.300"><path d="M808.500 603.500v11.500h11z"/><path d="M811.500 610v2.500h2.500M808.500 607.500h2M808.500 611h2"/></g>
<g stroke="#2a5db0" stroke-width="1.500"><circle cx="833.200" cy="606.800" r="2.700"/><circle cx="838.800" cy="612.200" r="2.700"/></g>
<g stroke="#8fb0d8" stroke-width=".9"><rect x="853.500" y="605.500" width="8" height="8"/><path d="M856.200 605.500v8M858.800 605.500v8M853.500 608.200h8M853.500 610.800h8M852 604l1.500 1.500M863 604l-1.500 1.500M852 615l1.500-1.500M863 615l-1.500-1.500"/></g>
<g stroke="#8fb0d8" stroke-width=".9"><rect x="876.500" y="606.500" width="6" height="6"/><path d="M874 604l2.500 2.500M885 604l-2.500 2.500M874 615l2.500-2.500M885 615l-2.500-2.500"/></g>
<g stroke="#2a5db0" stroke-width="1.200"><rect x="897" y="604" width="8.500" height="8.500"/><path d="M899.500 614.500h8v-8.500"/><path d="M899 608l1.800 1.800 3-3.300" stroke-width="1.400"/></g>
<g stroke="#8fb0d8" stroke-width="1"><rect x="919" y="604" width="8.500" height="8.500"/><path d="M921.500 614.500h8v-8.500" opacity=".7"/><path d="M921.300 606.300l4 4M925.300 606.300l-4 4"/></g>
<rect x="940.500" y="603.500" width="4.600" height="4.600" fill="#2a5db0" stroke="none"/><rect x="946.800" y="610.800" width="4" height="4" stroke="#2a5db0" stroke-width="1.100"/><g stroke="#2a5db0" stroke-width="1.200"><path d="M947 604.500h2.500v3M942.800 610.500v4.500h2.500"/></g>
</g>
</svg>
<div class="b" style="left:0px;top:639px;width:1200px;height:6px;background:linear-gradient(90deg,#f7e4d8 0,#f3dcd6 25%,#f2d9dc 50%,#f3dbe1 100%)"></div>
<div class="b" style="left:867px;top:639px;width:27px;height:3px;background:#f8eaee;border-radius:0 0 3px 3px"></div>
<div class="b" style="left:24px;top:643px;width:8px;height:4px;background:#c0282a;border-radius:4px 4px 0 0"></div>
<svg width="400" height="480" viewBox="0 0 400 480">
<circle cx="105.7" cy="191.7" r="46" fill="#fff" stroke="#cfdcea" stroke-width="1"/>
<path d="M105.7 191.7L78.66 228.91A46 46 0 0 0 132.74 228.91Z" fill="#eef2f7"/>
<path d="M79.54 227.70A44.5 44.5 0 0 0 131.86 227.70" fill="none" stroke="#2f86ee" stroke-width="3"/>
<path d="M105.70 176.20L105.70 145.70" stroke="#cfdcea" stroke-width="1"/>
<path d="M120.44 186.91L149.45 177.49" stroke="#cfdcea" stroke-width="1"/>
<path d="M114.81 204.24L132.74 228.91" stroke="#cfdcea" stroke-width="1"/>
<path d="M96.59 204.24L78.66 228.91" stroke="#cfdcea" stroke-width="1"/>
<path d="M90.96 186.91L61.95 177.49" stroke="#cfdcea" stroke-width="1"/>
<circle cx="105.7" cy="191.7" r="15.5" fill="#fff" stroke="#cfdcea" stroke-width="1"/>
<g fill="none" stroke="#24272b"><circle cx="103.500" cy="189" r="5.200" stroke-width="1.700"/><path d="M107.300 193l6.200 6.600" stroke-width="2.200" stroke-linecap="round"/></g>
<g fill="none" stroke="#24272b" stroke-width="1.600"><path d="M118 165.200v-2.400h11v2.400M123.500 162.800v7.400M121.200 170.200h4.600M119 173.300h9"/></g>
<g fill="#9a9ea4"><circle cx="92" cy="162.800" r="2.300"/><path d="M88.300 166.500h7.400v7h-2v-4h-3.400v4h-2z"/></g><circle cx="85.500" cy="164.500" r="2.600" fill="none" stroke="#9a9ea4" stroke-width="1.300"/><path d="M87.300 166.500l1.800 1.800" stroke="#9a9ea4" stroke-width="1.300"/>
<circle cx="76.500" cy="200" r="7" fill="#fff" stroke="#8e9298" stroke-width="1.200"/><path d="M72 198c1-3.500 5-5 8.500-3l-1.500 2.500 2 1.500-2.500 1.500.5 3.500-2.500 1.500-.5-3.500-3 1.500z" fill="#9a9ea4"/><path d="M82.500 206l2.800 2.800" stroke="#8e9298" stroke-width="1.300"/>
<rect x="128.600" y="195.600" width="10.800" height="10.800" fill="#fff" stroke="#24272b" stroke-width="1.200"/><path d="M140.300 196v11.300h-11.300" fill="none" stroke="#24272b" stroke-width="1.500"/><g fill="#24272b"><path d="M130.200 197.200h2.200l-2.200 2.200zM137.800 197.200h-2.200l2.200 2.200zM130.200 204.800h2.200l-2.200-2.200zM137.800 204.800h-2.200l2.200-2.200z"/></g>
<g fill="none" stroke="#24272b" stroke-width="1.500"><circle cx="105.500" cy="221.500" r="4.700"/><path d="M105.500 214v15M98 221.500h15"/></g><path d="M105.500 221.500h4.700a4.700 4.700 0 0 1-4.700 4.700z" fill="#24272b"/>
</svg>
<div class="b" style="left:83.5px;top:122px;width:45.5px;height:21px;background:#fff;border:1px solid #dde3ea;"></div>
<div class="b" style="left:89px;top:128.5px;width:8px;height:7px;background:#3b76c9"></div>
<svg width="200" height="150" viewBox="0 0 200 150"><path d="M115 129l6 6M121 129l-6 6" stroke="#24272b" stroke-width="1.500"/></svg>
<div class="b" style="left:115.3px;top:211.8px;width:206.2px;height:261.7px;background:#fff;border:1px solid #c4c9cf;box-shadow:1.500px 1px 0 rgba(0,0,0,.5),1px 2px 4px rgba(0,0,0,.3)"></div>
<div class="b" style="left:121.5px;top:219px;width:47px;height:1px;background:#d3d8de"></div>
<div class="b" style="left:267px;top:219px;width:48px;height:1px;background:#d3d8de"></div>
<div class="b" style="left:117px;top:283px;width:203.5px;height:1px;background:#e3e7ec"></div>
<div class="b" style="left:116.3px;top:416px;width:18.7px;height:18.7px;background:#dfe5ec"></div>
<span class="t" style="left:173.5px;top:213px;line-height:13px;font-size:9.7px;color:#2b3138;transform:scaleX(0.9507);">GD&amp;T Quick Creation</span>
<span class="t" style="left:133.7px;top:229px;line-height:13px;font-size:9.7px;color:#2b3138;transform:scaleX(0.9237);">Create Datum System...</span>
<span class="t" style="left:133.7px;top:248px;line-height:13px;font-size:9.7px;color:#2b3138;transform:scaleX(0.9256);">Create Element Group...</span>
<span class="t" style="left:133.7px;top:267px;line-height:13px;font-size:9.7px;color:#2b3138;transform:scaleX(0.9329);">Set GD&amp;T Standard For Current Project...</span>
<span class="t" style="left:138.3px;top:288px;line-height:13px;font-size:9.7px;color:#2b3138;transform:scaleX(0.9032);">Straightness...</span>
<span class="t" style="left:138.3px;top:306px;line-height:13px;font-size:9.7px;color:#2b3138;transform:scaleX(0.8560);">Flatness...</span>
<span class="t" style="left:138.3px;top:325px;line-height:13px;font-size:9.7px;color:#2b3138;transform:scaleX(0.9006);">Parallelism...</span>
<span class="t" style="left:138.3px;top:344px;line-height:13px;font-size:9.7px;color:#2b3138;transform:scaleX(0.9400);">Perpendicularity...</span>
<span class="t" style="left:138.3px;top:363px;line-height:13px;font-size:9.7px;color:#2b3138;transform:scaleX(0.9565);">Angularity...</span>
<span class="t" style="left:138.3px;top:381px;line-height:13px;font-size:9.7px;color:#2b3138;transform:scaleX(0.8992);">Position...</span>
<span class="t" style="left:138.3px;top:400px;line-height:13px;font-size:9.7px;color:#2b3138;transform:scaleX(0.9272);">Symmetry...</span>
<span class="t" style="left:138.3px;top:419px;line-height:13px;font-size:9.7px;color:#2b3138;transform:scaleX(0.9205);">Surface Profile...</span>
<span class="t" style="left:138.3px;top:438px;line-height:13px;font-size:9.7px;color:#2b3138;transform:scaleX(0.9007);">Run-Out...</span>
<span class="t" style="left:138.3px;top:457px;line-height:13px;font-size:9.7px;color:#2b3138;transform:scaleX(0.9319);">Total Run-Out...</span>
<svg width="400" height="480" viewBox="0 0 400 480">
<rect x="306.100" y="290.1" width="7.800" height="7.800" rx="2" fill="#fff" stroke="#a9aeb5" stroke-width=".9"/>
<rect x="306.100" y="308.1" width="7.800" height="7.800" rx="2" fill="#fff" stroke="#a9aeb5" stroke-width=".9"/>
<rect x="306.100" y="327.1" width="7.800" height="7.800" rx="2" fill="#fff" stroke="#a9aeb5" stroke-width=".9"/>
<rect x="306.100" y="346.1" width="7.800" height="7.800" rx="2" fill="#fff" stroke="#a9aeb5" stroke-width=".9"/>
<rect x="306.100" y="365.1" width="7.800" height="7.800" rx="2" fill="#fff" stroke="#a9aeb5" stroke-width=".9"/>
<rect x="306.100" y="383.1" width="7.800" height="7.800" rx="2" fill="#fff" stroke="#a9aeb5" stroke-width=".9"/>
<rect x="306.100" y="402.1" width="7.800" height="7.800" rx="2" fill="#fff" stroke="#a9aeb5" stroke-width=".9"/>
<rect x="305.700" y="420.7" width="8.600" height="8.600" rx="2" fill="#5b6573"/><path d="M307.700 425.0l1.700 1.700 3-3.300" fill="none" stroke="#fff" stroke-width="1.100"/>
<rect x="306.100" y="440.1" width="7.800" height="7.800" rx="2" fill="#fff" stroke="#a9aeb5" stroke-width=".9"/>
<rect x="306.100" y="459.1" width="7.800" height="7.800" rx="2" fill="#fff" stroke="#a9aeb5" stroke-width=".9"/>
<g fill="none" stroke="#2a5db0" stroke-width=".95">
<path d="M120.500 294.5h9"/>
<path d="M120.700 314.8l2.600-4.600h6.500l-2.600 4.600z"/>
<path d="M120.500 335.0l3.500-7M125 335.0l3.500-7"/>
<path d="M120 353.5h10M125 353.5v-7"/>
<path d="M129.500 372.5h-9l7-6.500"/>
<circle cx="125" cy="387.5" r="3"/><path d="M125 382.5v10M120 387.5h10"/>
<path d="M121 404.3h8M120 406.5h10M121 408.7h8"/>
<path d="M120.500 427.7a4.500 4.500 0 0 1 9 0z"/>
<path d="M120.500 448.0l7.500-7.500"/>
<path d="M119.500 466.7l4-5M119.500 466.7h5.500l4.500-5.500"/>
</g>
<path d="M128.500 440.0l-2.600.5 2.100 2.100z" fill="#2a5db0"/><path d="M130.500 459.8l-2.800.3 2 2.200zM124.300 460.3l-2.600.6 2.200 1.900z" fill="#2a5db0"/>
<g stroke="#2a5db0" stroke-width="1.100" fill="none"><path d="M125.500 236v-3.500M125.500 236l-3.500 3M125.500 236l3.500 3"/></g><circle cx="121.500" cy="239.500" r="1.300" fill="#2a5db0"/><circle cx="129.500" cy="239.500" r="1.300" fill="#2a5db0"/><path d="M125.500 230.500l1.700 2.500h-3.400z" fill="#2a9d4a"/>
</svg>
</body></html>
